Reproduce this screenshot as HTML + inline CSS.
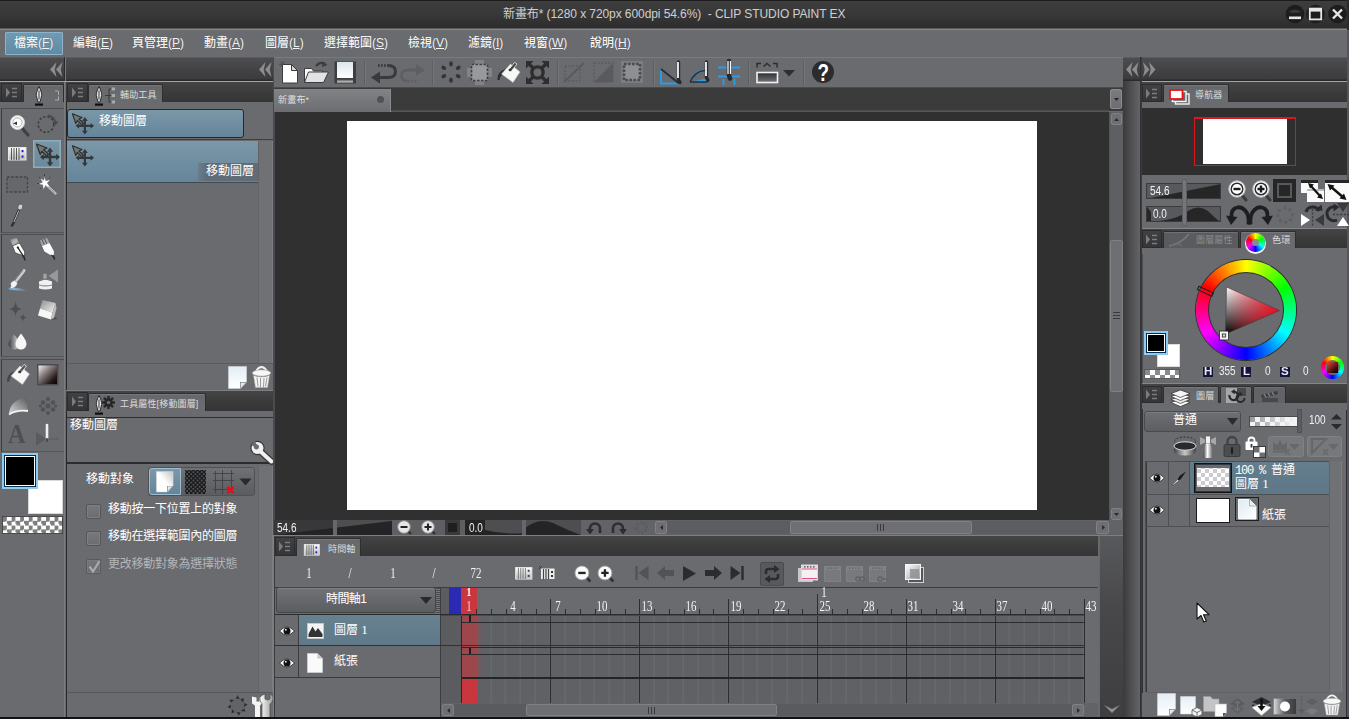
<!DOCTYPE html>
<html lang="zh-Hant">
<head>
<meta charset="utf-8">
<title>CLIP STUDIO PAINT EX</title>
<style>
*{box-sizing:border-box;margin:0;padding:0}
html,body{width:1349px;height:719px;overflow:hidden;background:#6a6b6f}
body{position:relative;font-family:"Liberation Sans","Noto Sans CJK TC",sans-serif;font-size:12px;color:#e8e8e8}
.a{position:absolute}
.t{position:absolute;white-space:nowrap;line-height:1}
svg{position:absolute;overflow:visible}
.dk{background:linear-gradient(#5c5c5e 0,#5c5c5e 1px,#4d4d4f 1px,#3b3b3d 22px,#2a2a2c 23px)}
.hdr{background:linear-gradient(#444 0,#3a3a3a 60%,#353535 100%)}
.pn{background:#6a6b6f}
.mi{position:absolute;top:36px;font-size:12px;color:#f4f4f4;white-space:nowrap;line-height:14px;font-weight:500;text-shadow:0 0 1px rgba(0,0,0,.3)}
.mi u{text-decoration-thickness:1px;text-underline-offset:1px}
.menuic{position:absolute;width:21px;height:19px;background:linear-gradient(#414143,#353537);border:1px solid #2c2c2e}
.tab{position:absolute;background:linear-gradient(#66676b,#6a6b6f 60%);border-radius:2px 2px 0 0;border:1px solid #2e2e30;border-bottom:none;box-shadow:inset 0 1px 0 #77787c}
.tabi{position:absolute;background:#5a5b5e;border-radius:2px 2px 0 0;border:1px solid #2e2e30;border-bottom:none;box-shadow:inset 0 1px 0 #707175}
.tl{font-size:9px;color:#dcdcdc;letter-spacing:.15px}
.sel{background:linear-gradient(#7b98a9,#66859a)}
.num{font-size:12.500px;transform:scaleX(.8);transform-origin:0 0;letter-spacing:0}
.snum{font-family:"Liberation Serif",serif;font-size:14px;transform:scaleX(.78);transform-origin:50% 0;width:30px;text-align:center}
.cb{position:absolute;width:15px;height:15px;background:linear-gradient(#77787c,#6c6d71);border:1px solid #55565a;border-radius:2px;box-shadow:inset 0 0 0 1px #7e7f83}
</style>
</head>
<body>
<!-- ===== TITLE BAR ===== -->
<div class="a" id="titlebar" style="left:0;top:0;width:1349px;height:28px;background:linear-gradient(#1c1c1c 0,#1c1c1c 1px,#3d3d3d 1px,#383838 50%,#2c2c2c 100%)"></div>
<div class="a" style="left:0;top:28px;width:1349px;height:1px;background:#58585a"></div><div class="a" style="left:0;top:29px;width:1349px;height:1px;background:#88898c"></div>
<div class="t" style="left:503px;top:8px;font-size:12px;color:#cfcfcf;letter-spacing:-.08px">新畫布* (1280 x 720px 600dpi 54.6%)&nbsp; - CLIP STUDIO PAINT EX</div>
<!-- window buttons -->
<svg style="left:1285px;top:4px" width="64" height="20" viewBox="0 0 64 20">
 <circle cx="10" cy="10" r="9.3" fill="#1d1d1d"/><circle cx="30.5" cy="10" r="9.3" fill="#1d1d1d"/><circle cx="52.5" cy="10" r="9.3" fill="#1d1d1d"/>
 <path d="M3.5 8 Q10 3 16.5 8 Q10 10 3.5 8Z" fill="#3a3a3a"/>
 <rect x="4" y="12.5" width="12" height="2.6" fill="#e6e6e6"/>
 <rect x="24.8" y="4.6" width="11.4" height="10.8" fill="none" stroke="#e6e6e6" stroke-width="1.8"/><rect x="24.8" y="4.6" width="11.4" height="3" fill="#e6e6e6"/>
 <path d="M48 5.5L57 14.5M57 5.5L48 14.5" stroke="#e6e6e6" stroke-width="2.4"/>
</svg>

<!-- ===== MENU BAR ===== -->
<div class="a" id="menubar" style="left:0;top:30px;width:1349px;height:27px;background:#6a6b6f"></div>
<div class="a" style="left:5px;top:32px;width:58px;height:23px;background:linear-gradient(#6f9ab3,#5f8ba5);border:1px solid #8db4c9;border-radius:1px"></div>
<div class="mi" style="left:14px">檔案(<u>F</u>)</div>
<div class="mi" style="left:73px">編輯(<u>E</u>)</div>
<div class="mi" style="left:132px">頁管理(<u>P</u>)</div>
<div class="mi" style="left:204px">動畫(<u>A</u>)</div>
<div class="mi" style="left:265px">圖層(<u>L</u>)</div>
<div class="mi" style="left:324px">選擇範圍(<u>S</u>)</div>
<div class="mi" style="left:408px">檢視(<u>V</u>)</div>
<div class="mi" style="left:468px">濾鏡(<u>I</u>)</div>
<div class="mi" style="left:524px">視窗(<u>W</u>)</div>
<div class="mi" style="left:590px">說明(<u>H</u>)</div>

<!--SECTION:LEFT-->
<!-- ===== LEFT: collapse strips ===== -->
<div class="a dk" style="left:0;top:57px;width:64px;height:24px"></div>
<div class="a dk" style="left:66px;top:57px;width:207px;height:24px"></div>
<div class="a" style="left:64px;top:57px;width:1px;height:25px;background:#2a2a2c"></div><div class="a" style="left:65px;top:57px;width:1px;height:25px;background:#77787b"></div><div class="a" style="left:64px;top:82px;width:1px;height:635px;background:#7a7b7f"></div><div class="a" style="left:66px;top:82px;width:1px;height:635px;background:#28282a"></div>
<div class="a" style="left:0;top:81px;width:273px;height:1px;background:#a4a4a6"></div>
<svg style="left:50px;top:62px" width="13" height="15" viewBox="0 0 13 15"><path d="M6.500 0L0 7.500 6.500 15 4.800 7.500zM12.500 0L6 7.500 12.500 15 10.800 7.500z" fill="#8c8c8e"/></svg>
<svg style="left:259px;top:62px" width="13" height="15" viewBox="0 0 13 15"><path d="M6.500 0L0 7.500 6.500 15 4.800 7.500zM12.500 0L6 7.500 12.500 15 10.800 7.500z" fill="#8c8c8e"/></svg>

<!-- tool palette header -->
<div class="a hdr" style="left:0;top:82px;width:64px;height:20px"></div><div class="a pn" style="left:0;top:102px;width:64px;height:6px"></div>
<div class="menuic" style="left:1px;top:83px"></div>
<svg style="left:6px;top:87px" width="12" height="11" viewBox="0 0 12 11"><path d="M0 .5L4 5.500 0 10.500z" fill="#7c7c7e"/><path d="M6 1.500h5M6 5.500h5M6 9.500h5" stroke="#7c7c7e" stroke-width="1.600"/></svg>
<div class="tab" style="left:23px;top:84px;width:41px;height:18px"></div>
<svg style="left:33px;top:86px" width="12" height="21" viewBox="0 0 12 21"><path d="M6 .5C4.600 3.500 3 7 3.300 9.500c.2 2 1.400 4 1.700 6.500h2c.3-2.500 1.500-4.500 1.700-6.500C9 7 7.400 3.500 6 .5z" fill="#e4e4e4" stroke="#2a2a2c" stroke-width="1"/><path d="M6 4.500v9" stroke="#6a6a6c" stroke-width="1.400"/><path d="M2 17.500h8v2.200H2z" fill="#0e0e10"/></svg>
<svg style="left:54px;top:90px" width="6" height="12" viewBox="0 0 6 12"><path d="M1 1h3M4.500 1v4M1 10h3M4.500 6.500v4" stroke="#c8c8c8" stroke-width="1" fill="none" opacity=".7"/></svg>


<!-- tool groups -->
<div class="a" style="left:1px;top:108px;width:63px;height:125px;border:1px solid #3c3d40;border-right:none;border-top-color:#4c4d50;border-bottom-color:#55565a;background:#6a6b6f"></div>
<div class="a" style="left:1px;top:234px;width:63px;height:123px;border:1px solid #3c3d40;border-right:none;border-top-color:#4c4d50;border-bottom-color:#55565a;background:#6a6b6f"></div>
<div class="a" style="left:1px;top:359px;width:63px;height:93px;border:1px solid #3c3d40;border-right:none;border-top-color:#4c4d50;border-bottom-color:#55565a;background:#6a6b6f"></div>
<div class="a" style="left:33px;top:140px;width:28px;height:28px;background:linear-gradient(#7a97a7,#6a8899);box-shadow:inset 0 0 0 1.500px #8badbd"></div>

<!-- magnifier -->
<svg style="left:8px;top:112px" width="22" height="24" viewBox="0 0 22 24"><path d="M14 16l6 7" stroke="#3f3f41" stroke-width="3.200" stroke-linecap="round"/><circle cx="9.500" cy="10.500" r="7" fill="#fafafa" stroke="#d0d0d0" stroke-width="1"/><circle cx="9.500" cy="10.500" r="4.600" fill="#fff" stroke="#9a9a9a" stroke-width=".8"/><path d="M5 11.500l4-2v3.500z" fill="#333"/></svg>
<!-- rotate -->
<svg style="left:36px;top:113px" width="24" height="22" viewBox="0 0 24 22"><circle cx="10" cy="11.500" r="7.800" fill="none" stroke="#3e3e40" stroke-width="1.600" stroke-dasharray="2.400 1.800"/><path d="M12 2.500q6 1 7.500 7" fill="none" stroke="#4a4a4c" stroke-width="2"/><path d="M16.500 8.500h6l-3 4z" fill="#4a4a4c"/></svg>
<!-- timeline tool -->
<svg style="left:8px;top:147px" width="19" height="14" viewBox="0 0 19 14"><defs><linearGradient id="gtl" x1="0" y1="0" x2="0" y2="1"><stop offset="0" stop-color="#fff"/><stop offset="1" stop-color="#b8b8b8"/></linearGradient></defs><rect x=".5" y=".5" width="17.500" height="12.500" fill="url(#gtl)" stroke="#e8e8e8"/><path d="M3.500 1v12M6 1v12M8.500 1v12M11 1v12" stroke="#555" stroke-width="1"/><rect x="13.500" y="3" width="2" height="2.200" fill="#22c"/><rect x="13.500" y="8.500" width="2" height="2.200" fill="#22c"/></svg>
<!-- move layer tool (selected) -->
<svg style="left:35px;top:143px" width="26" height="24" viewBox="0 0 26 24"><path d="M1.500 1l10.500 4-3.300 1.600 4.800 4.600-1.800 1.800-4.800-4.800L5.200 11.500z" fill="#77766e" stroke="#2a2c30" stroke-width="1.200" stroke-linejoin="round"/><path d="M15 4.500l3.200 4.300h-2v4h5v-2L25 14l-3.800 3.200v-2h-5v4h2L15 23.500l-3.200-4.300h2v-4h-5v2L5 14l3.800-3.200v2h5v-4h-2z" fill="#34383c"/></svg>
<!-- rect select -->
<svg style="left:6px;top:176px" width="23" height="17" viewBox="0 0 23 17"><rect x="1" y="1" width="20.500" height="15" fill="#66676b" stroke="#434346" stroke-width="1.300" stroke-dasharray="2.600 1.600"/></svg>
<!-- magic wand -->
<svg style="left:35px;top:172px" width="24" height="24" viewBox="0 0 24 24"><path d="M12 13.500l8.500 8" stroke="#d4d4d4" stroke-width="2.200" stroke-linecap="round"/><path d="M13.500 15l7 6.500" stroke="#8a8a8a" stroke-width="1"/><path d="M9.500 5l1.200 4 4.300-1-3 3 2.500 3.500-4-1.300-2 4-.5-4.500L4 12l3.800-1.800L5.500 6.500 9 8.500z" fill="#fff"/><path d="M9.500 2v2M4 5l1.200 1.200M15.500 5l-1.200 1.200M2 11.500h1.800M5.500 17l.8-1.200" stroke="#3e3e40" stroke-width="1"/></svg>
<!-- eyedropper -->
<svg style="left:9px;top:203px" width="16" height="24" viewBox="0 0 16 24"><path d="M10.500 5.500L4.500 20 3 22.500" stroke="#2e2e30" stroke-width="2.400" stroke-linecap="round"/><path d="M9.800 7.500L5 19" stroke="#bdbdbd" stroke-width="1"/><ellipse cx="11.300" cy="4" rx="2.400" ry="3" transform="rotate(22 11.300 4)" fill="#cfcfcf" stroke="#444" stroke-width=".6"/></svg>

<!-- pen -->
<svg style="left:7px;top:237px" width="22" height="24" viewBox="0 0 22 24"><defs><linearGradient id="gph" x1="0" y1="0" x2="1" y2="1"><stop offset="0" stop-color="#77787b"/><stop offset=".5" stop-color="#b8b8ba"/><stop offset="1" stop-color="#6e6f72"/></linearGradient></defs><path d="M3 2.500L9.500 1l2.800 5.500L6 9z" fill="url(#gph)"/><path d="M5.500 8.800L12.500 6l5.300 9-.8 5.800-2.300-2.600-6.500-2.400z" fill="#fbfbfb" stroke="#3a3a3c" stroke-width=".7"/><path d="M10.500 10l6.200 9.800" stroke="#1e1e20" stroke-width="1.300"/><circle cx="10.800" cy="10.500" r="1" fill="#1e1e20"/><path d="M16.500 19l1.400 3.800" stroke="#2a2a2c" stroke-width="1.600" stroke-linecap="round"/></svg>
<!-- pencil/marker -->
<svg style="left:37px;top:237px" width="22" height="24" viewBox="0 0 22 24"><path d="M3 3.500l7-2.500 2.500 5-7.500 3z" fill="#a9a9ab"/><path d="M5 2.800l2.300 5M7.500 1.800l2.300 5" stroke="#58595c" stroke-width="1.100"/><path d="M5 9l7.500-3 4.500 8.500-.3 4.500-4.200-1.500-5-3z" fill="#fbfbfb"/><path d="M13.500 17.500l3.300 1 .8 3.700z" fill="#2a2a2c"/><path d="M16.500 19l1 3" stroke="#2a2a2c" stroke-width="1.400" stroke-linecap="round"/></svg>
<!-- brush -->
<svg style="left:6px;top:268px" width="24" height="24" viewBox="0 0 24 24"><defs><linearGradient id="gbl" x1="0" x2="1"><stop offset="0" stop-color="#8fd0ff"/><stop offset="1" stop-color="#8fd0ff" stop-opacity="0"/></linearGradient></defs><path d="M2 21q8-3 20 1.500-12 1-20-1.500z" fill="url(#gbl)"/><path d="M18 2.500L9 14" stroke="#cfcfcf" stroke-width="3" stroke-linecap="round"/><path d="M17 2L8 13.500" stroke="#777" stroke-width="1"/><path d="M8.500 12.500l3 2.500q-1 5-8 6 2.500-3 1-5.500 1.500-2.500 4-3z" fill="#f4f4f4" stroke="#888" stroke-width=".5"/><path d="M3 20q2-.5 4 .5-2.500 1-4-.5z" fill="#58b4f0"/></svg>
<!-- airbrush -->
<svg style="left:35px;top:268px" width="26" height="24" viewBox="0 0 26 24"><path d="M23 1.500v13L13.500 8z" fill="#97989b"/><rect x="8" y="5.500" width="4" height="6" rx="1.200" fill="#a4a4a6" stroke="#6e6f72" stroke-width=".6"/><path d="M4 13.500q6.500-3.500 13 0v7q-6.500 2-13 0z" fill="#f1f1f1"/><path d="M4 17q6.500 1.800 13 0" stroke="#8a8b8e" stroke-width="1.200" fill="none"/><path d="M5 12.300q5.500-2.300 11 0" stroke="#77787b" stroke-width="1.400" fill="none"/></svg>
<!-- decoration sparkle -->
<svg style="left:8px;top:300px" width="22" height="24" viewBox="0 0 22 24"><path d="M7.500 1q.3 7.200 6.500 8-6.200.8-6.500 8-.3-7.200-6.500-8 6.200-.8 6.500-8z" fill="#4e4f53"/><path d="M15 13q.2 3.900 3.600 4.500-3.400.6-3.600 4.500-.2-3.900-3.600-4.500 3.400-.6 3.600-4.500z" fill="#4e4f53"/></svg>
<!-- eraser -->
<svg style="left:36px;top:298px" width="24" height="24" viewBox="0 0 24 24"><defs><linearGradient id="ger" x1="0" y1="0" x2="1" y2="1"><stop offset="0" stop-color="#8e8e90"/><stop offset="1" stop-color="#f2f2f2"/></linearGradient></defs><path d="M14 22l7.500-1-2-2z" fill="#4c4c4e"/><path d="M6.500 2l13 3-3 9.500-12.500-4z" fill="url(#ger)"/><path d="M4 10.500l12.500 4-1.500 7L2 17.500z" fill="#f6f6f6"/><path d="M16.500 14.500l3-9.500 1 5-2.500 10-3 1.500z" fill="#bdbdbf"/></svg>
<!-- blend -->
<svg style="left:7px;top:332px" width="22" height="18" viewBox="0 0 22 18"><defs><linearGradient id="gbd" x1="0" x2="1"><stop offset="0" stop-color="#3e3e40"/><stop offset="1" stop-color="#e8e8e8"/></linearGradient></defs><path d="M7 2.500q5.500 6 5.500 9.500a5.500 5.500 0 0 1-11 0Q1.500 8.500 7 2.500z" fill="url(#gbd)"/><path d="M14 1.500q5.500 7 5.500 10.500a5.500 5.500 0 0 1-11 0Q8.500 8.500 14 1.500z" fill="#f6f6f6"/></svg>

<!-- fill bucket -->
<svg style="left:5px;top:362px" width="26" height="26" viewBox="0 0 26 26"><path d="M2 20q-1-8 8-11l-2 5q-3 1-4 6z" fill="#47474a"/><path d="M6 14L15 4l9.500 8-7 10.500z" fill="#f7f7f7" stroke="#bbb" stroke-width=".6"/><path d="M13 10L19 2.500l2.500 1.500-6 7.500z" fill="#555" stroke="#eee" stroke-width=".8"/><circle cx="14.500" cy="10" r="1.300" fill="#333"/></svg>
<!-- gradient -->
<svg style="left:37px;top:364px" width="22" height="22" viewBox="0 0 22 22"><defs><linearGradient id="ggr" x1="0" y1="0" x2="1" y2="1"><stop offset="0" stop-color="#fff"/><stop offset=".38" stop-color="#8a8080"/><stop offset=".75" stop-color="#241a1a"/><stop offset="1" stop-color="#000"/></linearGradient></defs><rect x=".75" y=".75" width="20" height="20" fill="url(#ggr)" stroke="#4c4c4f" stroke-width="1.500"/></svg>
<!-- figure/contour -->
<svg style="left:7px;top:395px" width="24" height="22" viewBox="0 0 24 22"><defs><linearGradient id="gfg" x1="1" y1="0" x2="0" y2="1"><stop offset="0" stop-color="#58585b"/><stop offset="1" stop-color="#d8d8d8"/></linearGradient></defs><path d="M2 19Q3 5 19 2.500 19.500 10 21 15.500 10 14 2 19z" fill="url(#gfg)"/><path d="M2 19.500Q10 14.500 21 16" stroke="#f4f4f4" stroke-width="1.800" fill="none"/></svg>
<!-- tone (disabled) -->
<svg style="left:38px;top:396px" width="20" height="20" viewBox="0 0 20 20" opacity=".55"><g fill="#3e3e41"><circle cx="10" cy="3" r="2"/><circle cx="5" cy="6.500" r="2.300"/><circle cx="15" cy="6.500" r="2.300"/><circle cx="10" cy="10" r="2.600"/><circle cx="2.500" cy="10" r="1.600"/><circle cx="17.500" cy="10" r="1.600"/><circle cx="5" cy="13.500" r="2.300"/><circle cx="15" cy="13.500" r="2.300"/><circle cx="10" cy="17" r="2"/></g></svg>
<!-- text A -->
<div class="t" style="left:8px;top:421px;font-family:'Liberation Serif',serif;font-size:27px;font-weight:bold;color:#4e4f53;line-height:27px;transform:scaleX(.9);transform-origin:0 0">A</div>
<!-- correct line -->
<svg style="left:35px;top:423px" width="26" height="26" viewBox="0 0 26 26"><path d="M1 9v14l10-7z" fill="#5a5b5e"/><path d="M12 16h12" stroke="#5a5b5e" stroke-width="1"/><path d="M12 2v13" stroke="#f0f0f0" stroke-width="2.600" stroke-linecap="round"/><path d="M12 15v4" stroke="#444" stroke-width="1.600"/></svg>

<!-- colour swatches -->
<div class="a" style="left:28px;top:480px;width:35px;height:34px;background:#fff;border:1px solid #d9d9d9"></div>
<div class="a" style="left:2px;top:453px;width:36px;height:36px;background:#000;border:2px solid #8ccbf2;box-shadow:inset 0 0 0 1px #0c2c4c,inset 0 0 0 2px #fff"></div>
<div class="a" style="left:2px;top:516px;width:61px;height:18px;border:1px solid #4a4a4c;background:repeating-conic-gradient(#fff 0 25%,#7e7e7e 0 50%) 0 0/8.600px 8.600px"></div>
<!-- ===== SUB TOOL PANEL ===== -->
<div class="a hdr" style="left:66px;top:82px;width:207px;height:20px"></div><div class="a pn" style="left:67px;top:102px;width:206px;height:6px"></div>
<div class="menuic" style="left:67px;top:83px"></div>
<svg style="left:72px;top:87px" width="12" height="11" viewBox="0 0 12 11"><path d="M0 .5L4 5.500 0 10.500z" fill="#7c7c7e"/><path d="M6 1.500h5M6 5.500h5M6 9.500h5" stroke="#7c7c7e" stroke-width="1.600"/></svg>
<div class="tab" style="left:88px;top:84px;width:75px;height:18px"></div>
<svg style="left:93px;top:86px" width="12" height="21" viewBox="0 0 12 21"><path d="M6 .5C4.600 3.500 3 7 3.300 9.500c.2 2 1.400 4 1.700 6.500h2c.3-2.500 1.500-4.500 1.700-6.500C9 7 7.400 3.500 6 .5z" fill="#e4e4e4" stroke="#2a2a2c" stroke-width="1"/><path d="M6 4.500v9" stroke="#6a6a6c" stroke-width="1.400"/><path d="M2 17.500h8v2.200H2z" fill="#0e0e10"/></svg>
<svg style="left:104px;top:87px" width="12" height="18" viewBox="0 0 12 18"><path d="M1 8.500h4M5 2v13M5 2h3M5 8.500h3M5 15h3" stroke="#3a3a3c" stroke-width="1" fill="none"/><rect x="7.500" y=".5" width="3.500" height="3" fill="#a9a9ab"/><rect x="7.500" y="7" width="3.500" height="3" fill="#a9a9ab"/><rect x="7.500" y="13.500" width="3.500" height="3" fill="#a9a9ab"/></svg>
<div class="t tl" style="left:120px;top:91px">輔助工具</div>
<!-- selected group -->
<div class="a sel" style="left:67px;top:109px;width:177px;height:29px;border:1px solid #26282a;border-radius:3px"></div>
<svg style="left:71px;top:112px" width="24" height="24" viewBox="0 0 26 24"><path d="M1.500 1l10.500 4-3.300 1.600 4.800 4.600-1.800 1.800-4.800-4.800L5.200 11.500z" fill="#77766e" stroke="#2a2c30" stroke-width="1.200" stroke-linejoin="round"/><path d="M15 4.500l3.200 4.300h-2v4h5v-2L25 14l-3.800 3.200v-2h-5v4h2L15 23.500l-3.200-4.300h2v-4h-5v2L5 14l3.800-3.200v2h5v-4h-2z" fill="#34383c"/></svg>
<div class="t" style="left:99px;top:115px;font-size:12px;color:#fff">移動圖層</div>
<div class="a" style="left:67px;top:139px;width:206px;height:1px;background:#3d3e40"></div>
<!-- item -->
<div class="a sel" style="left:67px;top:141px;width:191px;height:42px;border-bottom:1px solid #3f4a52"></div>
<svg style="left:71px;top:144px" width="24" height="24" viewBox="0 0 26 24"><path d="M1.500 1l10.500 4-3.300 1.600 4.800 4.600-1.800 1.800-4.800-4.800L5.200 11.500z" fill="#77766e" stroke="#2a2c30" stroke-width="1.200" stroke-linejoin="round"/><path d="M15 4.500l3.200 4.300h-2v4h5v-2L25 14l-3.800 3.200v-2h-5v4h2L15 23.500l-3.200-4.300h2v-4h-5v2L5 14l3.800-3.200v2h5v-4h-2z" fill="#34383c"/></svg>
<div class="a" style="left:198px;top:163px;width:60px;height:18px;background:linear-gradient(90deg,rgba(98,108,120,.4),#626c78 15%)"></div>
<div class="t" style="left:206px;top:165px;font-size:12px;color:#fff">移動圖層</div>
<!-- list scrollbar -->
<div class="a" style="left:258px;top:141px;width:15px;height:222px;background:#707175;border-left:1px solid #626367;box-shadow:inset -1px 0 0 #7c7d81"></div>

<div class="a" style="left:67px;top:363px;width:206px;height:1px;background:#5a5b5f"></div>

<!-- new / trash -->
<svg style="left:228px;top:366px" width="19" height="23" viewBox="0 0 19 23"><defs><linearGradient id="gnw" x1="0" y1="0" x2="0" y2="1"><stop offset="0" stop-color="#e4eef5"/><stop offset="1" stop-color="#fff"/></linearGradient></defs><path d="M.5.5h18v15.500l-6 6.500H.5z" fill="url(#gnw)" stroke="#cfd5da" stroke-width=".6"/><path d="M18.500 16h-6.500v6.500z" fill="#555" /><path d="M12.500 16.500h5.500l-5.500 5.500z" fill="#e8e8e8"/></svg>
<svg style="left:251px;top:365px" width="21" height="24" viewBox="0 0 21 24"><path d="M5 6q5.500-8 11 0" fill="none" stroke="#f2f2f2" stroke-width="1.800"/><ellipse cx="10.500" cy="8" rx="9.300" ry="3.200" fill="#f7f7f7" stroke="#999" stroke-width=".6"/><path d="M2.500 10.500l2 12h12l2-12q-8 3-16 0z" fill="#f3f3f3" stroke="#aaa" stroke-width=".5"/><path d="M6 12.500l1 9M9.500 13v9M13 13l-.5 9M16 12.500l-1.500 9" stroke="#9a9a9a" stroke-width="1"/></svg>

<!-- ===== TOOL PROPERTY PANEL ===== -->
<div class="a" style="left:66px;top:390px;width:207px;height:1px;background:#7d7e82"></div>
<div class="a hdr" style="left:66px;top:391px;width:207px;height:20px"></div><div class="a pn" style="left:67px;top:411px;width:206px;height:6px"></div>
<div class="menuic" style="left:67px;top:392px"></div>
<svg style="left:72px;top:396px" width="12" height="11" viewBox="0 0 12 11"><path d="M0 .5L4 5.500 0 10.500z" fill="#7c7c7e"/><path d="M6 1.500h5M6 5.500h5M6 9.500h5" stroke="#7c7c7e" stroke-width="1.600"/></svg>
<div class="tab" style="left:88px;top:393px;width:118px;height:18px"></div>
<svg style="left:93px;top:395px" width="12" height="21" viewBox="0 0 12 21"><path d="M6 .5C4.600 3.500 3 7 3.300 9.500c.2 2 1.400 4 1.700 6.500h2c.3-2.500 1.500-4.500 1.700-6.500C9 7 7.400 3.500 6 .5z" fill="#e4e4e4" stroke="#2a2a2c" stroke-width="1"/><path d="M6 4.500v9" stroke="#6a6a6c" stroke-width="1.400"/><path d="M2 17.500h8v2.200H2z" fill="#0e0e10"/></svg>
<svg style="left:102px;top:396px" width="13" height="13" viewBox="0 0 13 13"><g fill="#262628"><circle cx="6.500" cy="6.500" r="4.300"/><rect x="5.300" y="0" width="2.400" height="13"/><rect x="5.300" y="0" width="2.400" height="13" transform="rotate(45 6.500 6.500)"/><rect x="5.300" y="0" width="2.400" height="13" transform="rotate(90 6.500 6.500)"/><rect x="5.300" y="0" width="2.400" height="13" transform="rotate(135 6.500 6.500)"/></g><circle cx="6.500" cy="6.500" r="1.800" fill="#6a6b6f"/></svg>
<div class="t tl" style="left:120px;top:400px">工具屬性[移動圖層]</div>
<!-- preview box -->
<div class="a" style="left:67px;top:417px;width:206px;height:47px;background:#6a6b6f;border-top:1px solid #2e2f31;border-bottom:2px solid #2b2c2e"></div>
<div class="t" style="left:70px;top:419px;font-size:12px;color:#fff">移動圖層</div>
<svg style="left:249px;top:439px" width="25" height="25" viewBox="0 0 25 25"><path d="M11 12l11.500 10.500" stroke="#38383a" stroke-width="6.500" stroke-linecap="round"/><circle cx="8.500" cy="9" r="7.200" fill="#38383a"/><path d="M11 12l11.500 10.500" stroke="#f0f0f0" stroke-width="4" stroke-linecap="round"/><circle cx="8.500" cy="9" r="6" fill="#f0f0f0"/><path d="M8.500 9L1 5.500 5.500 0z" fill="#6a6b6f"/><circle cx="7.300" cy="7.800" r="2.600" fill="#6a6b6f"/><path d="M4.200 3.200L1.500 6.500" stroke="#38383a" stroke-width=".8"/></svg>
<!-- property rows -->
<div class="a" style="left:258px;top:466px;width:15px;height:226px;background:#707175;border-left:1px solid #626367;box-shadow:inset -1px 0 0 #7c7d81"></div>

<div class="t" style="left:86px;top:473px;font-size:12px;color:#fff">移動對象</div>
<div class="a" style="left:148px;top:467px;width:107px;height:29px;background:linear-gradient(#707175,#5b5c60);border:1px solid #505155;border-radius:3px"></div>
<div class="a sel" style="left:149px;top:468px;width:32px;height:27px;border:1px solid #9dbdd0;border-radius:3px 0 0 3px"></div>
<svg style="left:156px;top:469.500px" width="17.500" height="23.500" viewBox="0 0 19 23"><defs><linearGradient id="gpg" x1="1" y1="0" x2="0" y2="1"><stop offset="0" stop-color="#c4c4c6"/><stop offset=".5" stop-color="#fff"/></linearGradient></defs><path d="M.5.500h18v15.500l-6 6.500H.5z" fill="url(#gpg)" stroke="#d8d8d8" stroke-width=".6"/><path d="M18.500 16h-6.500v6.500z" fill="#555"/><path d="M12.500 16.500h5.500l-5.500 5.500z" fill="#e8e8e8"/></svg>
<div class="a" style="left:185px;top:470px;width:21px;height:24px;background-color:#55565a;background-image:radial-gradient(circle,#1c1c1e 1.300px,transparent 1.600px),radial-gradient(circle,#1c1c1e 1.300px,transparent 1.600px);background-size:4.200px 4.200px;background-position:0 0,2.100px 2.100px"></div>
<svg style="left:212px;top:469px" width="26" height="26" viewBox="0 0 26 26"><path d="M1 4.500h21M1 11.500h21M1 20.500h15M3.500 2v22M10.500 1v24M19.500 1v17" stroke="#3a3b3e" stroke-width=".9" opacity=".85"/><path d="M15.500 18l6 6M21.500 18l-6 6" stroke="#e0101c" stroke-width="2.600"/></svg>
<svg style="left:239px;top:478px" width="13" height="8" viewBox="0 0 13 8"><path d="M.5.500h12L6.500 7.500z" fill="#2a2a2c"/></svg>
<div class="cb" style="left:86px;top:504px"></div>
<div class="t" style="left:108px;top:503px;font-size:12px;color:#fff;letter-spacing:-.25px">移動按一下位置上的對象</div>
<div class="cb" style="left:86px;top:531px"></div>
<div class="t" style="left:108px;top:530px;font-size:12px;color:#fff;letter-spacing:-.25px">移動在選擇範圍內的圖層</div>
<div class="cb" style="left:86px;top:559px;opacity:.85"></div>
<svg style="left:87px;top:559px" width="15" height="15" viewBox="0 0 15 15"><path d="M2.500 7.500l3.500 5L12.500 2" fill="none" stroke="#a9aaad" stroke-width="2.200"/></svg>
<div class="t" style="left:108px;top:558px;font-size:12px;color:#b4b5b8;letter-spacing:-.25px">更改移動對象為選擇狀態</div>
<div class="a" style="left:67px;top:692px;width:206px;height:1px;background:#56575b"></div>
<!-- bottom icons -->
<svg style="left:226px;top:694px" width="23" height="23" viewBox="0 0 23 23"><circle cx="11.500" cy="11.500" r="8" fill="#626367"/><g fill="#2c2c2e"><path d="M11.500 1l2 4-3.500-.5z"/><path d="M18 4l-1 4.500-2.500-3z"/><path d="M21.500 10.500l-3.500 2.500.5-4z"/><path d="M19.500 17.500l-4.500-.5 3-2.500z"/><path d="M13 21.500l-2.500-3.500 4 .5z"/><path d="M5.500 19.500l.5-4.500 2.500 3z"/><path d="M1.500 13l3.500-2.500-.5 4z"/><path d="M3.500 5.500l4.500.5-3 2.500z"/></g></svg>
<svg style="left:250px;top:693px" width="23" height="25" viewBox="0 0 23 25"><defs><linearGradient id="gwr" x1="0" x2="1"><stop offset="0" stop-color="#fff"/><stop offset="1" stop-color="#9a9a9c"/></linearGradient></defs><path d="M2 3.500v7l3 2v12h5v-12l2-2v-7l-2.500 1v4h-3v-4z" fill="#f4f4f4"/><path d="M12 24.500v-14q-3-2-2-6 1.500-3 5-3.500v5l2.500 1 2.500-1v-5q4 1.500 3 6-1 3-3 4v13.500z" fill="url(#gwr)" stroke="#4a4a4c" stroke-width=".7"/></svg>
<div class="a" style="left:0;top:717px;width:1349px;height:2px;background:#111"></div>
<!--END:LEFT-->
<!--SECTION:CENTER-->
<!-- ===== CENTER: toolbar ===== -->
<div class="a" style="left:273px;top:57px;width:2px;height:662px;background:#4a4b4e"></div>
<div class="a pn" style="left:274px;top:57px;width:849px;height:30px;border-top:1px solid #7a7b7f"></div>
<div class="a" style="left:274px;top:87px;width:849px;height:1px;background:#4a4b4e"></div>
<!-- group separators -->
<div class="a" style="left:364px;top:61px;width:1px;height:24px;background:#5c5d61;box-shadow:1px 0 0 #75767a"></div>
<div class="a" style="left:432px;top:61px;width:1px;height:24px;background:#5c5d61;box-shadow:1px 0 0 #75767a"></div>
<div class="a" style="left:557px;top:61px;width:1px;height:24px;background:#5c5d61;box-shadow:1px 0 0 #75767a"></div>
<div class="a" style="left:653px;top:61px;width:1px;height:24px;background:#5c5d61;box-shadow:1px 0 0 #75767a"></div>
<div class="a" style="left:748px;top:61px;width:1px;height:24px;background:#5c5d61;box-shadow:1px 0 0 #75767a"></div>
<div class="a" style="left:803px;top:61px;width:1px;height:24px;background:#5c5d61;box-shadow:1px 0 0 #75767a"></div>
<!-- new -->
<svg style="left:278px;top:60px" width="22" height="24" viewBox="0 0 22 24"><path d="M2 2l5 5M7 2L2 7M4.500 1v7M1 4.500h7" stroke="#4a4a4c" stroke-width=".8"/><path d="M4.500 4.500h9l6 6v12.500h-15z" fill="#fff" stroke="#3c3c3e" stroke-width="1"/><path d="M13.500 4.500v6h6z" fill="#d4d4d6" stroke="#3c3c3e" stroke-width="1" stroke-linejoin="round"/></svg>
<!-- open -->
<svg style="left:303px;top:60px" width="27" height="24" viewBox="0 0 27 24"><path d="M13 6q4-5 9-2" fill="none" stroke="#3c3c3e" stroke-width="2.200"/><path d="M19.500 1.500l5 3.500-5.500 2z" fill="#3c3c3e"/><path d="M1.500 22.500v-14h7l2 2.500h9v11.500z" fill="#fafafa" stroke="#3c3c3e" stroke-width="1"/><path d="M1.500 22.500l4-10.500h20l-5 10.500z" fill="#e2e2e4" stroke="#3c3c3e" stroke-width="1" stroke-linejoin="round"/></svg>
<!-- save -->
<svg style="left:334px;top:61px" width="23" height="23" viewBox="0 0 23 23"><defs><linearGradient id="gsv" x1="0" y1="0" x2="0" y2="1"><stop offset="0" stop-color="#dbe6ee"/><stop offset="1" stop-color="#fff"/></linearGradient><linearGradient id="gsv2" x1="0" y1="0" x2="0" y2="1"><stop offset="0" stop-color="#555"/><stop offset="1" stop-color="#d8d8d8"/></linearGradient></defs><rect x=".5" y=".5" width="21.500" height="22" fill="#3e3e40"/><rect x="3" y="1" width="16" height="16" fill="url(#gsv)"/><rect x="3" y="18.500" width="16" height="3" fill="url(#gsv2)"/></svg>
<!-- undo -->
<svg style="left:370px;top:62px" width="28" height="22" viewBox="0 0 28 22"><path d="M8 3.500h10" stroke="#3a3a3c" stroke-width="2.600" stroke-dasharray="1.800 1.200"/><path d="M18 3.500q7.500 0 7.500 6t-7.500 6H9" fill="none" stroke="#3a3a3c" stroke-width="3"/><path d="M10 9.500v12L1 15.500z" fill="#3a3a3c"/></svg>
<!-- redo (disabled) -->
<svg style="left:400px;top:62px" width="26" height="22" viewBox="0 0 26 22" opacity=".55"><path d="M8 19h10" stroke="#55565a" stroke-width="2.400" stroke-dasharray="1.800 1.200"/><path d="M8 19q-6.500 0-6.500-5.500T8 8h9" fill="none" stroke="#55565a" stroke-width="3"/><path d="M16 2v12l9-6z" fill="#55565a"/></svg>
<!-- clear dots -->
<svg style="left:440px;top:61px" width="22" height="22" viewBox="0 0 22 22"><g fill="#353537"><ellipse cx="11" cy="2.800" rx="1.900" ry="2.600"/><ellipse cx="11" cy="19.200" rx="1.900" ry="2.600"/><ellipse cx="3.800" cy="6.800" rx="2.600" ry="1.900" transform="rotate(30 3.800 6.800)"/><ellipse cx="18.200" cy="6.800" rx="2.600" ry="1.900" transform="rotate(-30 18.200 6.800)"/><ellipse cx="3.800" cy="15.200" rx="2.600" ry="1.900" transform="rotate(-30 3.800 15.200)"/><ellipse cx="18.200" cy="15.200" rx="2.600" ry="1.900" transform="rotate(30 18.200 15.200)"/></g></svg>
<!-- selection scale -->
<svg style="left:467px;top:60px" width="25" height="25" viewBox="0 0 25 25"><path d="M8 0h9v4h4v4h4v9h-4v4h-4v4H8v-4H4v-4H0V8h4V4h4z" fill="#8a8b8f" opacity=".75"/><rect x="4.500" y="4.500" width="16" height="16" fill="#98999c" stroke="#3e3e40" stroke-width="1.600" stroke-dasharray="2.400 1.600"/></svg>
<!-- fill -->
<svg style="left:495px;top:60px" width="27" height="26" viewBox="0 0 26 26"><path d="M2 20q-1-8 8-11l-2 5q-3 1-4 6z" fill="#2e2e30"/><path d="M6 14L15 4l9.500 8-7 10.500z" fill="#f7f7f7" stroke="#bbb" stroke-width=".6"/><path d="M13 10L19 2.500l2.500 1.500-6 7.500z" fill="#444" stroke="#eee" stroke-width=".8"/><circle cx="14.500" cy="10" r="1.300" fill="#333"/></svg>
<!-- expand -->
<svg style="left:526px;top:61px" width="23" height="23" viewBox="0 0 23 23"><circle cx="11.500" cy="11.500" r="5.600" fill="none" stroke="#2e2e30" stroke-width="3.400"/><g stroke="#2e2e30" stroke-width="3.400"><path d="M7.500 7.500L2.500 2.500M15.500 7.500L20.500 2.500M7.500 15.500L2.500 20.500M15.500 15.500L20.500 20.500"/></g><g fill="#2e2e30"><path d="M0 0h7.500L0 7.500zM23 0h-7.500L23 7.500zM0 23h7.500L0 15.500zM23 23h-7.500L23 15.500z"/></g></svg>
<!-- disabled icons -->
<svg style="left:563px;top:62px" width="22" height="21" viewBox="0 0 22 21" opacity=".5"><rect x="2" y="4" width="15" height="15" fill="none" stroke="#4a4b4e" stroke-width="1.400" stroke-dasharray="2 1.600"/><path d="M1 20L21 1" stroke="#4a4b4e" stroke-width="2"/></svg>
<svg style="left:592px;top:61px" width="23" height="23" viewBox="0 0 23 23" opacity=".5"><rect x="2" y="2" width="19" height="19" fill="none" stroke="#4a4b4e" stroke-width="1.400" stroke-dasharray="2 1.600"/><path d="M21 2v19H2z" fill="#4a4b4e"/></svg>
<svg style="left:621px;top:61px" width="22" height="22" viewBox="0 0 22 22"><rect x="0" y="0" width="22" height="22" fill="#7c7d81"/><rect x="3" y="3" width="16" height="16" fill="#8e8f92" stroke="#4a4b4e" stroke-width="2.600" stroke-dasharray="2.600 1.400"/></svg>
<!-- snap ruler -->
<svg style="left:659px;top:61px" width="24" height="24" viewBox="0 0 24 24"><path d="M2 8.500v14h19" fill="none" stroke="#2a9de8" stroke-width="1.800"/><path d="M2 8l18 14.500" stroke="#23303a" stroke-width="1.800"/><path d="M19.500 1v17.500l1.500 3" stroke="#2a2a2c" stroke-width="3.400" stroke-linecap="round"/><path d="M19 1v16" stroke="#f6f6f6" stroke-width="1.800"/></svg>
<!-- special ruler -->
<svg style="left:688px;top:61px" width="25" height="24" viewBox="0 0 25 24"><path d="M2 20.500q6-12 16-11" fill="none" stroke="#2a9de8" stroke-width="1.600"/><path d="M2 21h21l-3-4z" fill="#2a9de8"/><path d="M2 21q5-11 15-11.500M2 21h17" fill="none" stroke="#23303a" stroke-width="1.600"/><path d="M18.500 1v15.500l1.500 3" stroke="#2a2a2c" stroke-width="3.400" stroke-linecap="round"/><path d="M18 1v14" stroke="#f6f6f6" stroke-width="1.800"/></svg>
<!-- grid snap -->
<svg style="left:717px;top:60px" width="24" height="26" viewBox="0 0 24 26"><path d="M1 7.500h22M1 16.500h22M6.500 19v6M17.500 19v6" stroke="#2a9de8" stroke-width="1.800"/><path d="M12 1v14.500l1 3" stroke="#2a2a2c" stroke-width="4.600" stroke-linecap="round"/><path d="M11 1v13M13.500 1v13" stroke="#f6f6f6" stroke-width="1.300"/></svg>
<!-- dropdown icon -->
<svg style="left:756px;top:62px" width="40" height="22" viewBox="0 0 40 22"><defs><linearGradient id="gdd" x1="0" y1="0" x2="0" y2="1"><stop offset="0" stop-color="#2c2c2e"/><stop offset="1" stop-color="#77787b"/></linearGradient></defs><path d="M1 5.500V1.500h4M17 1.500h4v4M7.500 4.500L11 1.500l3.500 3" fill="none" stroke="#2e2e30" stroke-width="1.500"/><rect x="1" y="10.500" width="20.500" height="10" fill="url(#gdd)" stroke="#f2f2f2" stroke-width="1.600"/><path d="M27 8h12l-6 6.500z" fill="#2e2e30"/></svg>
<!-- help -->
<svg style="left:811px;top:60px" width="24" height="24" viewBox="0 0 24 24"><circle cx="12" cy="12" r="11" fill="#2c2c2e"/><text x="0" y="20.600" text-anchor="middle" font-family="Liberation Sans,sans-serif" font-weight="bold" font-size="23.500" fill="#fff" transform="translate(12.300 0) scale(.8 1)">?</text></svg>

<!-- ===== tab row ===== -->
<div class="a" style="left:274px;top:88px;width:849px;height:23px;background:#3b3b3c"></div>
<div class="a" style="left:274px;top:89px;width:117px;height:23px;background:linear-gradient(#828386,#6c6d70);border-right:1px solid #8a8b8e"></div>
<div class="t" style="left:278px;top:96px;font-size:9px;color:#dedede;letter-spacing:.2px">新畫布*</div>
<div class="a" style="left:377px;top:96px;width:7px;height:7px;border-radius:4px;background:#505154"></div>
<div class="a" style="left:392px;top:110px;width:717px;height:2px;background:linear-gradient(#48484a,#5a5a5c)"></div>
<div class="a" style="left:1110px;top:89px;width:12px;height:20px;background:linear-gradient(#7b7c80,#6c6d71);border:1px solid #8c8d91;border-radius:2px"></div>
<svg style="left:1113.500px;top:97.500px" width="5" height="3" viewBox="0 0 7 4"><path d="M0 0h7L3.500 4z" fill="#252527"/></svg>

<!-- ===== canvas ===== -->
<div class="a" style="left:275px;top:112px;width:834px;height:408px;background:#303031"></div>
<div class="a" style="left:347px;top:121px;width:690px;height:389px;background:#fff"></div>
<!-- v scrollbar -->
<div class="a" style="left:1109px;top:112px;width:14px;height:408px;background:#5e5f63;border-left:1px solid #55565a"></div>
<div class="a" style="left:1111px;top:113px;width:11px;height:12px;background:#6e6f73;border:1px solid #808185;border-radius:2px"></div>
<svg style="left:1113.500px;top:117.500px" width="5" height="3" viewBox="0 0 7 4"><path d="M0 4h7L3.500 0z" fill="#2a2a2c"/></svg>
<div class="a" style="left:1111px;top:508px;width:11px;height:12px;background:#6e6f73;border:1px solid #808185;border-radius:2px"></div>
<svg style="left:1113.500px;top:512.500px" width="5" height="3" viewBox="0 0 7 4"><path d="M0 0h7L3.500 4z" fill="#2a2a2c"/></svg>
<div class="a" style="left:1110px;top:240px;width:13px;height:152px;background:#6e6f73;border:1px solid #808185;border-radius:2px"></div>
<svg style="left:1113px;top:312px" width="7" height="7" viewBox="0 0 7 7"><path d="M0 .5h7M0 3.500h7M0 6.500h7" stroke="#3a3a3c" stroke-width="1"/></svg>

<!-- ===== status row ===== -->
<div class="a" style="left:274px;top:520px;width:849px;height:15px;background:#626367"></div>
<svg style="left:274px;top:520px" width="118" height="15" viewBox="0 0 118 15"><rect width="118" height="15" fill="#4e4e51"/><rect width="60" height="15" fill="#38383a"/><path d="M0 15L118 1v14z" fill="#242426"/><rect x="59" y="0" width="4" height="15" fill="#66676b"/></svg>
<div class="t num" style="left:277px;top:522px;color:#f0f0f0">54.6</div>
<div class="a" style="left:392px;top:520px;width:73px;height:15px;background:#5e5f63"></div>
<svg style="left:396px;top:519px" width="17" height="17" viewBox="0 0 17 17"><path d="M11 11l4 4" stroke="#333" stroke-width="2.400"/><circle cx="8" cy="8" r="6.300" fill="#e6e6e6" stroke="#8a8a8a" stroke-width="1"/><path d="M4.500 8h7" stroke="#222" stroke-width="2"/></svg>
<svg style="left:420px;top:519px" width="17" height="17" viewBox="0 0 17 17"><path d="M11 11l4 4" stroke="#333" stroke-width="2.400"/><circle cx="8" cy="8" r="6.300" fill="#e6e6e6" stroke="#8a8a8a" stroke-width="1"/><path d="M4.500 8h7M8 4.500v7" stroke="#222" stroke-width="2"/></svg>
<div class="a" style="left:445px;top:520px;width:15px;height:15px;background:#1f1f20;border:3px solid #3a3a3c"></div>
<svg style="left:465px;top:520px" width="116" height="15" viewBox="0 0 116 15"><rect width="116" height="15" fill="#4e4e51"/><path d="M0 0h20v10Q40 15 58 13V15H0zM58 15V10Q72 -3 88 3 102 10 116 15z" fill="#242426"/><rect x="57" y="0" width="4" height="15" fill="#66676b"/></svg>
<div class="t num" style="left:469px;top:522px;color:#f0f0f0">0.0</div>
<svg style="left:586px;top:520px" width="18" height="15" viewBox="0 0 18 15"><path d="M4 13V8.500a5 5 0 0 1 10 0V13" fill="none" stroke="#2e2e30" stroke-width="2.600"/><path d="M0 9h8l-4 5.500z" fill="#2e2e30"/></svg>
<svg style="left:609px;top:520px" width="18" height="15" viewBox="0 0 18 15"><path d="M4 13V8.500a5 5 0 0 1 10 0V13" fill="none" stroke="#2e2e30" stroke-width="2.600"/><path d="M10 9h8l-4 5.500z" fill="#2e2e30"/></svg>
<svg style="left:634px;top:520px" width="15" height="15" viewBox="0 0 23 23" opacity=".5"><g fill="#4a4b4e"><path d="M11.500 1l2 4-3.500-.5z"/><path d="M18 4l-1 4.500-2.500-3z"/><path d="M21.500 10.500l-3.500 2.500.5-4z"/><path d="M19.500 17.500l-4.500-.5 3-2.500z"/><path d="M13 21.500l-2.500-3.500 4 .5z"/><path d="M5.500 19.500l.5-4.500 2.500 3z"/><path d="M1.500 13l3.500-2.500-.5 4z"/><path d="M3.500 5.500l4.500.5-3 2.500z"/></g></svg>
<!-- h scrollbar -->
<div class="a" style="left:655px;top:521px;width:454px;height:13px;background:#5c5d61"></div>
<div class="a" style="left:655px;top:521px;width:12px;height:13px;background:#6e6f73;border:1px solid #808185;border-radius:2px"></div>
<svg style="left:659.5px;top:525px" width="3" height="5" viewBox="0 0 4 7"><path d="M4 0v7L0 3.500z" fill="#2a2a2c"/></svg>
<div class="a" style="left:1096px;top:521px;width:13px;height:13px;background:#6e6f73;border:1px solid #808185;border-radius:2px"></div>
<svg style="left:1101.5px;top:525px" width="3" height="5" viewBox="0 0 4 7"><path d="M0 0v7l4-3.500z" fill="#2a2a2c"/></svg>
<div class="a" style="left:790px;top:521px;width:182px;height:13px;background:#6e6f73;border:1px solid #808185;border-radius:2px"></div>
<svg style="left:877px;top:524px" width="7" height="7" viewBox="0 0 7 7"><path d="M.5 0v7M3.500 0v7M6.500 0v7" stroke="#3a3a3c" stroke-width="1"/></svg>
<div class="a" style="left:1110px;top:520px;width:13px;height:15px;background:#626367"></div>
<!--END:CENTER-->
<!--SECTION:TIMELINE-->
<!-- ===== TIMELINE ===== -->
<div class="a" style="left:274px;top:535px;width:849px;height:1px;background:#7e7f83"></div>
<div class="a hdr" style="left:274px;top:536px;width:824px;height:20px"></div>
<div class="a" style="left:273px;top:535px;width:1px;height:182px;background:#7e7f83"></div><div class="a" style="left:274px;top:536px;width:1px;height:181px;background:#38383a"></div>
<div class="menuic" style="left:275px;top:537px;width:20px"></div>
<svg style="left:279px;top:541px" width="12" height="11" viewBox="0 0 12 11"><path d="M0 .5L4 5.500 0 10.500z" fill="#7c7c7e"/><path d="M6 1.500h5M6 5.500h5M6 9.500h5" stroke="#7c7c7e" stroke-width="1.600"/></svg>
<div class="tab" style="left:296px;top:538px;width:65px;height:18px"></div>
<svg style="left:303px;top:544px" width="18" height="12" viewBox="0 0 19 14"><rect x=".5" y=".5" width="17.500" height="12.500" fill="url(#gtl)" stroke="#e8e8e8"/><path d="M3.500 1v12M6 1v12M8.500 1v12M11 1v12" stroke="#555" stroke-width="1"/><rect x="13.500" y="3" width="2" height="2.200" fill="#22c"/><rect x="13.500" y="8.500" width="2" height="2.200" fill="#22c"/></svg>
<div class="t tl" style="left:328px;top:545px">時間軸</div>
<div class="a" style="left:1099px;top:536px;width:24px;height:181px;background:linear-gradient(#58595c,#48484a 40%,#3e3e40);border-left:1px solid #66676a"></div><div class="a" style="left:1123px;top:536px;width:1px;height:181px;background:#67686b"></div>
<svg style="left:1104px;top:705px" width="16" height="8" viewBox="0 0 16 8"><path d="M0 0l8 4 8-4-8 8z" fill="#8e8e90"/></svg>
<div class="a pn" style="left:275px;top:556px;width:823px;height:31px"></div>
<div class="t snum" style="left:294.3px;top:566.500px;color:#f4f4f4">1</div>
<div class="t snum" style="left:335.3px;top:566.500px;color:#f4f4f4">/</div>
<div class="t snum" style="left:377.5px;top:566.500px;color:#f4f4f4">1</div>
<div class="t snum" style="left:418.7px;top:566.500px;color:#f4f4f4">/</div>
<div class="t snum" style="left:460.500px;top:566.500px;color:#f4f4f4">72</div>
<svg style="left:515px;top:567px" width="18" height="13" viewBox="0 0 19 14"><rect x=".5" y=".5" width="17.500" height="12.500" fill="url(#gtl)" stroke="#e8e8e8"/><path d="M3.500 1v12M6 1v12M8.500 1v12M11 1v12" stroke="#777" stroke-width="1"/><rect x="13.500" y="3" width="2" height="2.200" fill="#444"/><rect x="13.500" y="8.500" width="2" height="2.200" fill="#444"/></svg>
<svg style="left:539px;top:566px" width="16" height="14" viewBox="0 0 16 14"><path d="M0 0l3 3M3 0L0 3" stroke="#333" stroke-width=".8"/><rect x="2" y="2.500" width="13.500" height="10.500" fill="#ececec"/><path d="M4.500 3v10M7 3v10M9.500 3v10" stroke="#444" stroke-width="1.200"/><rect x="12" y="5" width="2" height="2" fill="#333"/><rect x="12" y="9" width="2" height="2" fill="#333"/></svg>
<svg style="left:574px;top:565px" width="18" height="18" viewBox="0 0 17 17"><path d="M11 11l4.500 4.500" stroke="#333" stroke-width="2.600"/><circle cx="7.500" cy="7.500" r="6.600" fill="#fbfbfb" stroke="#9a9a9a" stroke-width=".8"/><path d="M4 7.500h7" stroke="#222" stroke-width="2.200"/></svg>
<svg style="left:597px;top:565px" width="18" height="18" viewBox="0 0 17 17"><path d="M11 11l4.500 4.500" stroke="#333" stroke-width="2.600"/><circle cx="7.500" cy="7.500" r="6.600" fill="#fbfbfb" stroke="#9a9a9a" stroke-width=".8"/><path d="M4 7.500h7M7.500 4v7" stroke="#222" stroke-width="2.200"/></svg>
<svg style="left:635px;top:566px" width="14" height="14" viewBox="0 0 14 14"><path d="M1.500 0v14" stroke="#525356" stroke-width="2.400"/><path d="M13.500 0v14L3.500 7z" fill="#525356"/></svg>
<svg style="left:657px;top:566px" width="17" height="14" viewBox="0 0 17 14"><path d="M8 0v4h9v6H8v4L0 7z" fill="#525356"/></svg>
<svg style="left:683px;top:566px" width="13" height="15" viewBox="0 0 13 15"><path d="M0 0l13 7.500L0 15z" fill="#2c2c2e"/></svg>
<svg style="left:705px;top:566px" width="17" height="14" viewBox="0 0 17 14"><path d="M9 0v4H0v6h9v4l8-7z" fill="#2c2c2e"/></svg>
<svg style="left:730px;top:566px" width="14" height="14" viewBox="0 0 14 14"><path d="M12.500 0v14" stroke="#2c2c2e" stroke-width="2.400"/><path d="M.5 0v14l10-7z" fill="#2c2c2e"/></svg>
<div class="a" style="left:760px;top:562px;width:24px;height:24px;background:#58595c;border:1px solid #4a4b4e;border-radius:2px"></div>
<svg style="left:763px;top:565px" width="18" height="18" viewBox="0 0 18 18"><path d="M3 9V6.500q0-2.500 2.500-2.500H12M15 9v2.500q0 2.500-2.500 2.500H6" fill="none" stroke="#2c2c2e" stroke-width="2.600"/><path d="M11 0l5.500 4L11 8zM7 10l-5.500 4L7 18z" fill="#2c2c2e"/></svg>
<svg style="left:798px;top:564px" width="20" height="19" viewBox="0 0 20 19"><rect x="0" y="4" width="15" height="14" fill="#c8c8ca"/><rect x="3.500" y="1" width="16" height="15" fill="#f4f0f2" stroke="#d8d8da" stroke-width="1"/><rect x="3.500" y="1" width="16" height="3.500" fill="#dcdcde"/><path d="M6 2.800h1.500M9 2.800h1.500M12 2.800h1.500M15 2.800h1.500" stroke="#444" stroke-width="1.200"/><path d="M4 5h15M4 14.500h15" stroke="#e0508c" stroke-width="1"/></svg>
<svg style="left:824px;top:566px" width="17" height="16" viewBox="0 0 17 16" opacity=".7"><rect x=".5" y=".5" width="16" height="15" fill="#7f8084" stroke="#8a8b8f"/><rect x=".5" y=".5" width="16" height="3.500" fill="#8c8d91"/><path d="M3 2.200h1.500M6 2.200h1.500M9 2.200h1.500M12 2.200h1.500" stroke="#5a5b5e" stroke-width="1.200"/></svg>
<svg style="left:846px;top:566px" width="19" height="17" viewBox="0 0 19 17" opacity=".7"><rect x=".5" y=".5" width="16" height="15" fill="#7f8084" stroke="#8a8b8f"/><rect x=".5" y=".5" width="16" height="3.500" fill="#8c8d91"/><path d="M3 2.200h1.500M6 2.200h1.500M9 2.200h1.500M12 2.200h1.500" stroke="#5a5b5e" stroke-width="1.200"/><circle cx="12" cy="13" r="2.200" fill="none" stroke="#5a5b5e" stroke-width="1.200"/><circle cx="16" cy="13" r="2.200" fill="none" stroke="#5a5b5e" stroke-width="1.200"/></svg>
<svg style="left:869px;top:566px" width="19" height="17" viewBox="0 0 19 17" opacity=".7"><rect x=".5" y=".5" width="16" height="15" fill="#7f8084" stroke="#8a8b8f"/><rect x=".5" y=".5" width="16" height="3.500" fill="#8c8d91"/><path d="M3 2.200h1.500M6 2.200h1.500M9 2.200h1.500M12 2.200h1.500" stroke="#5a5b5e" stroke-width="1.200"/><circle cx="11" cy="13" r="2.200" fill="none" stroke="#5a5b5e" stroke-width="1.200"/><path d="M14 13h4" stroke="#5a5b5e" stroke-width="1.200"/></svg>
<svg style="left:905px;top:564px" width="19" height="19" viewBox="0 0 19 19"><defs><linearGradient id="gon" x1="0" y1="0" x2="1" y2="1"><stop offset="0" stop-color="#fff"/><stop offset="1" stop-color="#9a9a9c"/></linearGradient></defs><rect x="3.500" y="3.500" width="15" height="15" fill="#55565a" stroke="#cfcfd1" stroke-width="1"/><rect x=".5" y=".5" width="15" height="15" fill="url(#gon)" stroke="#f4f4f4" stroke-width="1"/><rect x="5" y="5" width="9" height="9" fill="#8e8f92" opacity=".8"/></svg>
<div class="a" style="left:275px;top:587px;width:823px;height:1px;background:#3c3d40"></div>
<div class="a" style="left:276px;top:587px;width:160px;height:26px;background:linear-gradient(#717276,#5c5d61);border:1px solid #434447;border-radius:3px;box-shadow:inset 0 1px 0 #808185"></div>
<div class="t" style="left:326px;top:593px;font-size:12px;color:#fff;letter-spacing:-.6px">時間軸1</div>
<svg style="left:420px;top:597px" width="12" height="7" viewBox="0 0 12 7"><path d="M0 0h12L6 7z" fill="#2a2a2c"/></svg>
<div class="a" style="left:436px;top:588px;width:4px;height:26px;background:repeating-linear-gradient(#48494c 0 1px,#77787c 1px 2px)"></div>
<div class="a" style="left:440px;top:588px;width:1px;height:129px;background:#3c3d40"></div>
<div class="a" style="left:441px;top:588px;width:8px;height:115px;background:#5b5c5f"></div>
<div class="a" style="left:449px;top:588px;width:12px;height:26px;background:#2a2ab4"></div>
<div class="a" style="left:449px;top:614px;width:649px;height:89px;background:#5b5c5f"></div>
<div class="a" style="left:462px;top:614px;width:622px;height:89px;background:repeating-linear-gradient(90deg,#606165 0,#606165 13.82px,#6c6d71 13.82px,#6c6d71 14.82px);background-position:-0.3px 0"></div>
<div class="a" style="left:1084px;top:614px;width:14px;height:89px;background:#6a6b6f"></div>
<div class="a" style="left:461px;top:588px;width:16px;height:115px;background:#c9363e"></div>
<div class="a" style="left:461px;top:615px;width:22px;height:63px;background:linear-gradient(90deg,#a0454b 0,#9a484d 60%,rgba(130,84,88,.6) 80%,rgba(96,97,101,0) 100%)"></div>
<div class="a" style="left:461px;top:614px;width:1px;height:89px;background:#1a1a8c"></div>
<div class="a" style="left:476.3px;top:609px;width:1px;height:5px;background:#2c2d2f"></div>
<div class="a" style="left:491.1px;top:609px;width:1px;height:5px;background:#2c2d2f"></div>
<div class="a" style="left:506.0px;top:609px;width:1px;height:5px;background:#2c2d2f"></div>
<div class="a" style="left:520.8px;top:609px;width:1px;height:5px;background:#2c2d2f"></div>
<div class="a" style="left:535.6px;top:609px;width:1px;height:5px;background:#2c2d2f"></div>
<div class="a" style="left:550.4px;top:599px;width:1px;height:104px;background:#2c2d2f"></div>
<div class="a" style="left:565.2px;top:609px;width:1px;height:5px;background:#2c2d2f"></div>
<div class="a" style="left:580.1px;top:609px;width:1px;height:5px;background:#2c2d2f"></div>
<div class="a" style="left:594.9px;top:609px;width:1px;height:5px;background:#2c2d2f"></div>
<div class="a" style="left:609.7px;top:609px;width:1px;height:5px;background:#2c2d2f"></div>
<div class="a" style="left:624.5px;top:609px;width:1px;height:5px;background:#2c2d2f"></div>
<div class="a" style="left:639.3px;top:599px;width:1px;height:104px;background:#2c2d2f"></div>
<div class="a" style="left:654.2px;top:609px;width:1px;height:5px;background:#2c2d2f"></div>
<div class="a" style="left:669.0px;top:609px;width:1px;height:5px;background:#2c2d2f"></div>
<div class="a" style="left:683.8px;top:609px;width:1px;height:5px;background:#2c2d2f"></div>
<div class="a" style="left:698.6px;top:609px;width:1px;height:5px;background:#2c2d2f"></div>
<div class="a" style="left:713.4px;top:609px;width:1px;height:5px;background:#2c2d2f"></div>
<div class="a" style="left:728.3px;top:599px;width:1px;height:104px;background:#2c2d2f"></div>
<div class="a" style="left:743.1px;top:609px;width:1px;height:5px;background:#2c2d2f"></div>
<div class="a" style="left:757.9px;top:609px;width:1px;height:5px;background:#2c2d2f"></div>
<div class="a" style="left:772.7px;top:609px;width:1px;height:5px;background:#2c2d2f"></div>
<div class="a" style="left:787.5px;top:609px;width:1px;height:5px;background:#2c2d2f"></div>
<div class="a" style="left:802.4px;top:609px;width:1px;height:5px;background:#2c2d2f"></div>
<div class="a" style="left:817.2px;top:599px;width:1px;height:104px;background:#2c2d2f"></div>
<div class="a" style="left:832.0px;top:609px;width:1px;height:5px;background:#2c2d2f"></div>
<div class="a" style="left:846.8px;top:609px;width:1px;height:5px;background:#2c2d2f"></div>
<div class="a" style="left:861.6px;top:609px;width:1px;height:5px;background:#2c2d2f"></div>
<div class="a" style="left:876.5px;top:609px;width:1px;height:5px;background:#2c2d2f"></div>
<div class="a" style="left:891.3px;top:609px;width:1px;height:5px;background:#2c2d2f"></div>
<div class="a" style="left:906.1px;top:599px;width:1px;height:104px;background:#2c2d2f"></div>
<div class="a" style="left:920.9px;top:609px;width:1px;height:5px;background:#2c2d2f"></div>
<div class="a" style="left:935.7px;top:609px;width:1px;height:5px;background:#2c2d2f"></div>
<div class="a" style="left:950.6px;top:609px;width:1px;height:5px;background:#2c2d2f"></div>
<div class="a" style="left:965.4px;top:609px;width:1px;height:5px;background:#2c2d2f"></div>
<div class="a" style="left:980.2px;top:609px;width:1px;height:5px;background:#2c2d2f"></div>
<div class="a" style="left:995.0px;top:599px;width:1px;height:104px;background:#2c2d2f"></div>
<div class="a" style="left:1009.8px;top:609px;width:1px;height:5px;background:#2c2d2f"></div>
<div class="a" style="left:1024.7px;top:609px;width:1px;height:5px;background:#2c2d2f"></div>
<div class="a" style="left:1039.5px;top:609px;width:1px;height:5px;background:#2c2d2f"></div>
<div class="a" style="left:1054.3px;top:609px;width:1px;height:5px;background:#2c2d2f"></div>
<div class="a" style="left:1069.1px;top:609px;width:1px;height:5px;background:#2c2d2f"></div>
<div class="a" style="left:1083.9px;top:599px;width:1px;height:104px;background:#2c2d2f"></div>
<div class="t snum" style="left:453.8px;top:600px;color:#f4c8c8">1</div>
<div class="t snum" style="left:498.3px;top:600px;color:#f4f4f4">4</div>
<div class="t snum" style="left:542.7px;top:600px;color:#f4f4f4">7</div>
<div class="t snum" style="left:587.2px;top:600px;color:#f4f4f4">10</div>
<div class="t snum" style="left:631.6px;top:600px;color:#f4f4f4">13</div>
<div class="t snum" style="left:676.1px;top:600px;color:#f4f4f4">16</div>
<div class="t snum" style="left:720.6px;top:600px;color:#f4f4f4">19</div>
<div class="t snum" style="left:765.0px;top:600px;color:#f4f4f4">22</div>
<div class="t snum" style="left:809.5px;top:600px;color:#f4f4f4">25</div>
<div class="t snum" style="left:853.9px;top:600px;color:#f4f4f4">28</div>
<div class="t snum" style="left:898.4px;top:600px;color:#f4f4f4">31</div>
<div class="t snum" style="left:942.9px;top:600px;color:#f4f4f4">34</div>
<div class="t snum" style="left:987.3px;top:600px;color:#f4f4f4">37</div>
<div class="t snum" style="left:1031.8px;top:600px;color:#f4f4f4">40</div>
<div class="t snum" style="left:1076.2px;top:600px;color:#f4f4f4">43</div>
<div class="t snum" style="left:453.500px;top:586px;font-size:12.500px;font-weight:bold;color:#fff">1</div>
<div class="t snum" style="left:809px;top:586px;color:#f4f4f4">1</div>
<div class="a" style="left:817.2px;top:594px;width:1px;height:6px;background:#2c2d2f"></div>
<div class="a" style="left:275px;top:614px;width:809px;height:1px;background:#2a2b2d"></div><div class="a" style="left:441px;top:615px;width:643px;height:1px;background:#48494c"></div>
<div class="a" style="left:462px;top:622px;width:622px;height:1px;background:#2a2b2d"></div>
<div class="a" style="left:275px;top:645px;width:809px;height:1px;background:#303133"></div>
<div class="a" style="left:462px;top:647px;width:622px;height:1px;background:#2a2b2d"></div>
<div class="a" style="left:462px;top:654px;width:622px;height:1px;background:#2a2b2d"></div>
<div class="a" style="left:275px;top:677px;width:165px;height:1px;background:#3a3b3d"></div>
<div class="a" style="left:462px;top:677px;width:622px;height:2px;background:#242527"></div>
<div class="a" style="left:468.500px;top:615px;width:2px;height:7px;background:#1e1e20"></div>
<div class="a" style="left:468.500px;top:648px;width:2px;height:6px;background:#1e1e20"></div>
<div class="a" style="left:298px;top:615px;width:1px;height:62px;background:#3c3d40"></div>
<div class="a" style="left:299px;top:615px;width:141px;height:30px;background:linear-gradient(#67818f,#5f7989)"></div>
<svg style="left:279px;top:626px" width="16" height="10" viewBox="0 0 16 10"><path d="M.5 5Q8-3 15.500 5 8 13 .5 5z" fill="#f6f6f6" stroke="#222" stroke-width=".8"/><circle cx="8" cy="5" r="3.500" fill="#111"/><circle cx="6.800" cy="3.800" r="1" fill="#ddd"/></svg>
<svg style="left:279px;top:658px" width="16" height="10" viewBox="0 0 16 10"><path d="M.5 5Q8-3 15.500 5 8 13 .5 5z" fill="#f6f6f6" stroke="#222" stroke-width=".8"/><circle cx="8" cy="5" r="3.500" fill="#111"/><circle cx="6.800" cy="3.800" r="1" fill="#ddd"/></svg>
<svg style="left:307px;top:623px" width="17" height="16" viewBox="0 0 17 16"><rect x=".5" y=".5" width="16" height="15" fill="#f4f4f4" stroke="#c8c8ca"/><path d="M1.500 14V11l4-7.500 3 5 2.500-3.500 4.500 6v3z" fill="#333"/></svg>
<div class="t" style="left:334px;top:623px;font-size:12px;color:#fff">圖層 <span style="font-family:'Liberation Serif',serif;font-size:13px">1</span></div>
<svg style="left:307px;top:653px" width="16" height="20" viewBox="0 0 16 20"><path d="M.5.500h10l5 5v14H.5z" fill="#fafafa" stroke="#d0d0d2" stroke-width=".8"/><path d="M10.500.500v5h5z" fill="#c8c8ca"/></svg>
<div class="t" style="left:334px;top:655px;font-size:12px;color:#fff">紙張</div>
<div class="a" style="left:441px;top:703px;width:657px;height:14px;background:#626367"></div>
<div class="a" style="left:454px;top:704px;width:618px;height:12px;background:#5a5b5f"></div>
<div class="a" style="left:442px;top:704px;width:12px;height:12px;background:#6e6f73;border:1px solid #808185;border-radius:2px"></div>
<svg style="left:446.5px;top:708px" width="3" height="5" viewBox="0 0 4 7"><path d="M4 0v7L0 3.500z" fill="#2a2a2c"/></svg>
<div class="a" style="left:1072px;top:704px;width:12px;height:12px;background:#6e6f73;border:1px solid #808185;border-radius:2px"></div>
<svg style="left:1076.5px;top:708px" width="3" height="5" viewBox="0 0 4 7"><path d="M0 0v7l4-3.500z" fill="#2a2a2c"/></svg>
<div class="a" style="left:526px;top:704px;width:251px;height:12px;background:#6e6f73;border:1px solid #808185;border-radius:2px"></div>
<svg style="left:648px;top:707px" width="7" height="7" viewBox="0 0 7 7"><path d="M.5 0v7M3.500 0v7M6.500 0v7" stroke="#3a3a3c" stroke-width="1"/></svg>
<!--END:TIMELINE-->
<!--SECTION:RIGHT-->
<!-- ===== RIGHT: strips ===== -->
<div class="a dk" style="left:1123px;top:57px;width:17px;height:24px"></div>
<div class="a" style="left:1123px;top:81px;width:17px;height:636px;background:linear-gradient(90deg,#3a3a3c 0,#505052 50%,#636467 100%)"></div>
<div class="a" style="left:1140px;top:57px;width:2px;height:660px;background:linear-gradient(90deg,#2e2e30,#3e3e41)"></div>
<div class="a dk" style="left:1142px;top:57px;width:207px;height:24px"></div>
<div class="a" style="left:1142px;top:81px;width:207px;height:1px;background:#a4a4a6"></div>
<svg style="left:1126px;top:62px" width="13" height="15" viewBox="0 0 13 15"><path d="M6.500 0L0 7.500 6.500 15 4.800 7.500zM12.500 0L6 7.500 12.500 15 10.800 7.500z" fill="#8c8c8e"/></svg>
<svg style="left:1143px;top:62px" width="13" height="15" viewBox="0 0 13 15"><path d="M0 0L6.500 7.500 0 15 1.700 7.500zM6 0L12.500 7.500 6 15 7.700 7.500z" fill="#8c8c8e"/></svg>

<!-- ===== NAVIGATOR ===== -->
<div class="a hdr" style="left:1142px;top:82px;width:207px;height:20px"></div><div class="a pn" style="left:1142px;top:102px;width:205px;height:6px"></div>
<div class="menuic" style="left:1142px;top:84px;width:20px;height:18px"></div>
<svg style="left:1146px;top:88px" width="12" height="11" viewBox="0 0 12 11"><path d="M0 .5L4 5.500 0 10.500z" fill="#7c7c7e"/><path d="M6 1.500h5M6 5.500h5M6 9.500h5" stroke="#7c7c7e" stroke-width="1.600"/></svg>
<div class="tab" style="left:1163px;top:84px;width:66px;height:18px"></div>
<svg style="left:1169px;top:89px" width="21" height="16" viewBox="0 0 21 16"><rect x="6.500" y="5" width="13.500" height="10" fill="#6a6b6f" stroke="#f2f2f2" stroke-width="1.400"/><rect x="3.500" y="2.500" width="13.500" height="10" fill="#6a6b6f" stroke="#f2f2f2" stroke-width="1.400"/><rect x="1" y="1" width="12.500" height="9" fill="#fff" stroke="#e8141c" stroke-width="1.800"/></svg>
<div class="t tl" style="left:1195px;top:91px">導航器</div>
<div class="a" style="left:1142px;top:108px;width:207px;height:67px;background:#2f2f30"></div>
<div class="a" style="left:1203px;top:118px;width:84px;height:46px;background:#fff"></div>
<div class="a" style="left:1194px;top:117px;width:102px;height:49px;border:1px solid #e0141c;border-top-width:2px"></div>
<!-- sliders -->
<svg style="left:1146px;top:183px" width="75" height="16" viewBox="0 0 75 16"><rect width="75" height="16" fill="#58595d"/><path d="M0 16L75 1v15z" fill="#262627"/><path d="M.5.500h74v15H.5z" fill="none" stroke="#3a3a3c"/></svg>
<div class="t num" style="left:1149.500px;top:185px;color:#f2f2f2">54.6</div>
<svg style="left:1146px;top:206px" width="75" height="16" viewBox="0 0 75 16"><rect width="75" height="16" fill="#58595d"/><path d="M0 16Q30 15 42 5 52 -2 62 5 72 15 75 16z" fill="#262627"/><path d="M0 0L5 6V16H0z" fill="#262627"/><path d="M.5.500h74v15H.5z" fill="none" stroke="#3a3a3c"/></svg>
<div class="t num" style="left:1153px;top:208px;color:#f2f2f2">0.0</div>
<div class="a" style="left:1182px;top:179px;width:5px;height:47px;background:#75767a;border:1px solid #5e5f63"></div>
<!-- zoom out/in -->
<svg style="left:1227px;top:179px" width="22" height="24" viewBox="0 0 22 24"><path d="M14 15l5 6" stroke="#3a3a3c" stroke-width="3" stroke-linecap="round"/><circle cx="10" cy="10" r="8.200" fill="#fff" stroke="#bdbdbf" stroke-width="1"/><circle cx="10" cy="10" r="5.800" fill="#fff" stroke="#2e2e30" stroke-width="1.500"/><path d="M6.500 10h7" stroke="#1a1a1c" stroke-width="2.400"/></svg>
<svg style="left:1250.500px;top:179px" width="22" height="24" viewBox="0 0 22 24"><path d="M14 15l5 6" stroke="#3a3a3c" stroke-width="3" stroke-linecap="round"/><circle cx="10" cy="10" r="8.200" fill="#fff" stroke="#bdbdbf" stroke-width="1"/><circle cx="10" cy="10" r="5.800" fill="#fff" stroke="#2e2e30" stroke-width="1.500"/><path d="M6.500 10h7M10 6.500v7" stroke="#1a1a1c" stroke-width="2.400"/></svg>
<div class="a" style="left:1273px;top:179px;width:23px;height:23px;background:#262627;border:4px solid #262627;box-shadow:inset 0 0 0 2px #58595d"></div>
<!-- fit icons -->
<svg style="left:1301px;top:180px" width="23" height="22" viewBox="0 0 23 22"><rect x="0" y="0" width="17" height="13" fill="#fafafa"/><rect x="0" y="0" width="17" height="3" fill="#262627"/><rect x="6" y="9" width="17" height="13" fill="#fafafa"/><rect x="6" y="9" width="17" height="2" fill="#bbb"/><path d="M9 5l11 12" stroke="#111" stroke-width="2.200"/><path d="M7 3l6 1.500-4 4zM22 19l-6-1.500 4-4z" fill="#111"/></svg>
<svg style="left:1325px;top:180px;z-index:3" width="24" height="22" viewBox="0 0 24 22"><rect x="0" y="0" width="24" height="22" fill="#fafafa"/><rect x="0" y="0" width="24" height="3" fill="#262627"/><path d="M5 6l14 12" stroke="#111" stroke-width="2.400"/><path d="M2.500 4l7 1.500-4.500 5zM21.500 20l-7-1.500 4.500-5z" fill="#111"/></svg>
<!-- rotate -->
<svg style="left:1226px;top:205px" width="24" height="20" viewBox="0 0 24 20"><path d="M22.500 19.500C24 5 15 1.500 11 2.500 6.500 3.500 5 8 5.500 13" fill="none" stroke="#1e1e20" stroke-width="3.800"/><path d="M0 10.500l11.500 1.500L5 20z" fill="#1e1e20"/></svg>
<svg style="left:1249px;top:205px" width="24" height="20" viewBox="0 0 24 20"><path d="M1.500 19.500C0 5 9 1.500 13 2.500 17.500 3.500 19 8 18.500 13" fill="none" stroke="#1e1e20" stroke-width="3.800"/><path d="M24 10.500L12.500 12 19 20z" fill="#1e1e20"/></svg>
<svg style="left:1274px;top:204px" width="22" height="22" viewBox="0 0 23 23" opacity=".55"><g fill="#55565a"><path d="M11.500 1l2 5-4-.5z"/><path d="M18.500 4l-1.500 5-3-3.500z"/><path d="M22 11l-4.500 2.500.5-4.500z"/><path d="M19.500 18.500l-5-1.500 3.500-3z"/><path d="M12.500 22l-2.500-4.500 4.500.5z"/><path d="M5 19.500l1-5 3 3.500z"/><path d="M1 12.500l4.500-2.500-.5 4.500z"/><path d="M3.500 5l5 1.500-3.500 3z"/></g></svg>
<!-- flip H / V -->
<svg style="left:1301px;top:203px" width="23" height="23" viewBox="0 0 23 23"><path d="M5 9a7 7 0 0 1 13-1" fill="none" stroke="#2a2a2c" stroke-width="3"/><path d="M13.500 7.500h8l-1-6z" fill="#2a2a2c"/><path d="M11.500 6v17" stroke="#3a3a3c" stroke-width="1.400" stroke-dasharray="2 1.600"/><path d="M0 11l9 6-9 6z" fill="#fff"/><path d="M23 11l-9 6 9 6z" fill="#3a3a3c"/></svg>
<svg style="left:1325px;top:203px;z-index:3" width="24" height="23" viewBox="0 0 24 23"><path d="M11 4a7 7 0 1 0 1 13" fill="none" stroke="#2a2a2c" stroke-width="3"/><path d="M8.500 .5l6 3.500-6 4.500z" fill="#2a2a2c"/><path d="M8 11.500h16" stroke="#3a3a3c" stroke-width="1.400" stroke-dasharray="2 1.600"/><path d="M12 0h12l-6 9z" fill="#3a3a3c"/><path d="M12 23h12l-6-9z" fill="#fff"/></svg>

<!-- ===== COLOUR WHEEL PANEL ===== -->
<div class="a" style="left:1142px;top:228px;width:207px;height:1px;background:#85868a"></div>
<div class="a hdr" style="left:1142px;top:229px;width:207px;height:19px"></div><div class="a pn" style="left:1142px;top:248px;width:205px;height:6px"></div>
<div class="menuic" style="left:1142px;top:230px;width:20px;height:18px"></div>
<svg style="left:1146px;top:234px" width="12" height="11" viewBox="0 0 12 11"><path d="M0 .5L4 5.500 0 10.500z" fill="#7c7c7e"/><path d="M6 1.500h5M6 5.500h5M6 9.500h5" stroke="#7c7c7e" stroke-width="1.600"/></svg>
<div class="tabi" style="left:1163px;top:231px;width:76px;height:17px"></div>
<svg style="left:1168px;top:233px" width="26" height="14" viewBox="0 0 26 14"><path d="M1 13q12-2 20-12" fill="none" stroke="#77787c" stroke-width="1.600"/><path d="M3 13q5-5 11 0" fill="none" stroke="#6e6f73" stroke-width="1.200"/></svg>
<div class="t tl" style="left:1196px;top:236px;color:#8b8c90">圖層屬性</div>
<div class="tab" style="left:1240px;top:231px;width:56px;height:17px"></div>
<div class="a" style="left:1246px;top:233px;width:19px;height:19px;border-radius:50%;background:conic-gradient(from 300deg,#f00,#ff0,#0f0,#0ff,#00f,#f0f,#f00);box-shadow:0 1px 0 1px #f4f4f4"></div>
<div class="a" style="left:1252px;top:239px;width:7px;height:7px;border-radius:50%;background:#8a8b8f"></div>
<div class="t tl" style="left:1272px;top:236px">色環</div>
<div class="a" style="left:1142px;top:254px;width:1px;height:130px;background:#4a4b4e"></div>
<!-- wheel -->
<div class="a" style="left:1196px;top:260px;width:100px;height:100px;border-radius:50%;background:conic-gradient(from 300deg,#f00,#ff0,#0f0,#0ff,#00f,#f0f,#f00);box-shadow:0 0 0 1px #2e2e30"></div>
<div class="a" style="left:1209px;top:273px;width:74px;height:74px;border-radius:50%;background:#6a6b6f;box-shadow:0 0 0 1px #2e2e30"></div>
<svg style="left:1196px;top:260px" width="100" height="100" viewBox="0 0 100 100"><defs><linearGradient id="gtr1" x1="30" y1="27" x2="30" y2="74" gradientUnits="userSpaceOnUse"><stop offset="0" stop-color="#fff"/><stop offset="1" stop-color="#000"/></linearGradient><linearGradient id="gtr2" x1="30" y1="50" x2="83" y2="50" gradientUnits="userSpaceOnUse"><stop offset="0" stop-color="#f00a1e" stop-opacity="0"/><stop offset="1" stop-color="#f00a1e"/></linearGradient></defs><path d="M30.500 27L83.500 50.500 29.500 74z" fill="url(#gtr1)"/><path d="M30.500 27L83.500 50.500 29.500 74z" fill="url(#gtr2)" stroke="#3a3a3c" stroke-width=".6"/><rect x="24.500" y="72" width="7" height="7" fill="#d8d8d8" stroke="#fff" stroke-width="1.400"/><rect x="23.500" y="71" width="9" height="9" fill="none" stroke="#222" stroke-width=".7"/><rect x="26.500" y="74" width="3" height="3" fill="none" stroke="#222" stroke-width=".7"/><g transform="rotate(25 9.500 31)"><rect x="1.500" y="29.500" width="16" height="3.600" fill="none" stroke="#1e1e20" stroke-width="1"/></g></svg>
<!-- swatches -->
<div class="a" style="left:1157px;top:344px;width:23px;height:23px;background:#fff;border:1px solid #dcdcdc"></div>
<div class="a" style="left:1144px;top:331px;width:24px;height:24px;background:#000;border:2px solid #8ccbf2;box-shadow:inset 0 0 0 1px #0c2c4c,inset 0 0 0 2px #fff"></div>
<div class="a" style="left:1144px;top:369px;width:36px;height:10px;background:repeating-conic-gradient(#fff 0 25%,#8a8a8a 0 50%) 0 0/10px 10px;border:1px solid #5a5b5e"></div>
<!-- HLS -->
<div class="a" style="left:1203px;top:367px;width:10px;height:10px;background:#15153a"></div>
<div class="t" style="left:1204px;top:367px;font-size:10px;font-weight:bold;color:#e8e8f4;transform:scaleX(1.150);transform-origin:0 0">H</div>
<div class="t num" style="left:1218.500px;top:365px;color:#eee">355</div>
<div class="a" style="left:1241px;top:367px;width:10px;height:10px;background:#15153a"></div>
<div class="t" style="left:1243px;top:367px;font-size:10px;font-weight:bold;color:#e8e8f4;transform:scaleX(1.150);transform-origin:0 0">L</div>
<div class="t num" style="left:1264.500px;top:365px;color:#eee">0</div>
<div class="a" style="left:1280px;top:367px;width:10px;height:10px;background:#15153a"></div>
<div class="t" style="left:1281px;top:367px;font-size:10px;font-weight:bold;color:#e8e8f4;transform:scaleX(1.150);transform-origin:0 0">S</div>
<div class="t num" style="left:1303px;top:365px;color:#eee">0</div>
<div class="a" style="left:1321px;top:356px;width:23px;height:23px;border-radius:50%;background:conic-gradient(from 300deg,#f00,#ff0,#0f0,#0ff,#00f,#f0f,#f00)"></div>
<div class="a" style="left:1325px;top:360px;width:15px;height:15px;border-radius:50%;background:#6a6b6f"></div>
<div class="a" style="left:1327px;top:362px;width:11px;height:11px;background:linear-gradient(135deg,#e64a3c,#3c0a0a 70%,#000)"></div>
<!-- ===== LAYER PANEL ===== -->
<div class="a" style="left:1142px;top:383px;width:207px;height:1px;background:#85868a"></div>
<div class="a hdr" style="left:1142px;top:384px;width:207px;height:19px"></div><div class="a pn" style="left:1142px;top:403px;width:205px;height:7px"></div>
<div class="menuic" style="left:1142px;top:386px;width:20px;height:17px"></div>
<svg style="left:1146px;top:389px" width="12" height="11" viewBox="0 0 12 11"><path d="M0 .5L4 5.500 0 10.500z" fill="#7c7c7e"/><path d="M6 1.500h5M6 5.500h5M6 9.500h5" stroke="#7c7c7e" stroke-width="1.600"/></svg>
<div class="tab" style="left:1163px;top:386px;width:56px;height:17px"></div>
<svg style="left:1170px;top:389px" width="21" height="19" viewBox="0 0 21 19"><g stroke="#2a2a2c" stroke-width=".7"><path d="M1 13.500l9.500-3.500 9.500 3.500-9.500 4z" fill="#fff"/><path d="M1 10.500l9.500-3.500 9.500 3.500-9.500 4z" fill="#e8e8e8"/><path d="M1 7.500l9.500-3.500 9.500 3.500-9.500 4z" fill="#fff"/><path d="M1 4.500L10.500 1l9.500 3.500-9.500 4z" fill="#f4f4f4"/></g></svg>
<div class="t tl" style="left:1196px;top:392px">圖層</div>
<div class="tabi" style="left:1220px;top:386px;width:32px;height:17px;background:#6c6d71"></div>
<svg style="left:1226px;top:388px" width="21" height="15" viewBox="0 0 21 15"><rect x="0" y="0" width="11" height="15" fill="#a6a7aa"/><rect x="11" y="0" width="9" height="8" fill="#48494c"/><path d="M3.500 7a4.300 4.300 0 1 0 4.300-3.500" fill="none" stroke="#2a2a2c" stroke-width="2.200"/><path d="M8.500 1L5 3.800l3.800 2.400z" fill="#2a2a2c"/><path d="M18.500 10a4 4 0 1 1-4-4" fill="none" stroke="#2a2a2c" stroke-width="2"/><path d="M13.500 3.500l3.500 2.700-3.700 2.300z" fill="#2a2a2c"/></svg>
<div class="tabi" style="left:1253px;top:386px;width:33px;height:17px;background:#626367"></div>
<svg style="left:1260px;top:390px" width="20" height="12" viewBox="0 0 20 12"><path d="M1 5l16-4 1 3L2 8z" fill="#3c3d40"/><path d="M4 4.300l2 2.500M8 3.300l2 2.500M12 2.300l2 2.500" stroke="#808185" stroke-width="1.400"/><rect x="2" y="8" width="16" height="4" fill="#47484b"/></svg>
<!-- blend mode -->
<div class="a" style="left:1144px;top:411px;width:97px;height:21px;background:linear-gradient(#6e6f73,#5d5e62);border:1px solid #4a4b4e;border-radius:3px;box-shadow:inset 0 1px 0 #7c7d81"></div>
<div class="t" style="left:1173px;top:414px;font-size:12px;color:#fff">普通</div>
<svg style="left:1227px;top:418px" width="11" height="7" viewBox="0 0 11 7"><path d="M0 0h11L5.500 7z" fill="#2a2a2c"/></svg>
<!-- opacity -->
<div class="a" style="left:1249px;top:416px;width:49px;height:11px;background:linear-gradient(90deg,rgba(244,244,244,0),#f4f4f4 95%),repeating-conic-gradient(#f4f4f4 0 25%,#9a9a9c 0 50%) 0 0/10px 10px;border:1px solid #4a4b4e"></div>
<div class="a" style="left:1297px;top:409px;width:5px;height:24px;background:#5c5d61;border:1px solid #505155"></div>
<div class="t num" style="left:1308.500px;top:414px;color:#f2f2f2">100</div>
<svg style="left:1331px;top:414px" width="11" height="16" viewBox="0 0 11 16"><path d="M0 5.500h11L5.500 0zM0 10h11l-5.500 5.500z" fill="#2a2a2c"/></svg>
<div class="a" style="left:1346px;top:410px;width:1px;height:307px;background:#2e2e30"></div>
<!-- icon row -->
<svg style="left:1173px;top:435px" width="24" height="22" viewBox="0 0 24 22"><defs><linearGradient id="gbw" x1="0" x2="1"><stop offset="0" stop-color="#444"/><stop offset=".5" stop-color="#c8c8c8"/><stop offset="1" stop-color="#444"/></linearGradient></defs><ellipse cx="12" cy="6.500" rx="10.500" ry="4.500" fill="none" stroke="#2e2e30" stroke-width="1" stroke-dasharray="2 1.500"/><path d="M1 11v4.500q0 5 11 5t11-5V11z" fill="url(#gbw)"/><ellipse cx="12" cy="11" rx="11" ry="4.200" fill="#2a2a2c" stroke="#ddd" stroke-width="1"/></svg>
<svg style="left:1200px;top:435px" width="16" height="24" viewBox="0 0 16 24"><defs><linearGradient id="glh" x1="0" x2="1"><stop offset="0" stop-color="#3a3a3c"/><stop offset=".45" stop-color="#fff"/><stop offset="1" stop-color="#5a5a5c"/></linearGradient></defs><path d="M0 2l5 2.500v3L0 10zM16 2l-5 2.500v3L16 10z" fill="#a8a8aa"/><path d="M5.500 1h5v8h-5z" fill="#f2f2f2" stroke="#444" stroke-width=".6"/><path d="M5 9h6l2 14H3z" fill="url(#glh)"/></svg>
<svg style="left:1223px;top:435px" width="18" height="22" viewBox="0 0 18 22"><path d="M4.500 10V6.500a4.500 4.500 0 0 1 9 0V10" fill="none" stroke="#434346" stroke-width="2.400"/><rect x="1" y="9.500" width="16" height="12" rx="1.500" fill="#4c4d50" stroke="#333" stroke-width=".8"/><path d="M9 13v5" stroke="#1e1e20" stroke-width="2.200" stroke-linecap="round"/></svg>
<svg style="left:1245px;top:436px" width="21" height="22" viewBox="0 0 21 22"><path d="M3.500 6V4.500a3 3 0 0 1 6 0V6" fill="none" stroke="#fff" stroke-width="1.800"/><rect x=".5" y="5.500" width="12" height="8.500" rx="1" fill="#fff"/><path d="M6.500 8v3.500" stroke="#333" stroke-width="1.800"/><rect x="8.500" y="10.500" width="12" height="11" fill="#fff" stroke="#3a3a3c" stroke-width="1"/><path d="M9 11h5.500v5.500H9zM14.500 16.500H20V21h-5.500z" fill="#6e6f73"/></svg>
<div class="a" style="left:1268px;top:436px;width:36px;height:21px;background:#77787c;border:1px solid #808185;border-radius:3px"></div>
<svg style="left:1272px;top:438px" width="30" height="18" viewBox="0 0 30 18" opacity=".8"><path d="M1 12V4l4 3 3-5 3 5 4-3v8z" fill="#636468"/><path d="M1 13.500h14" stroke="#636468" stroke-width="2"/><path d="M17 6h11l-5.500 6z" fill="#636468"/><path d="M13 11l5 6M18 11l-5 6" stroke="#66676b" stroke-width="1.600"/></svg>
<div class="a" style="left:1307px;top:436px;width:35px;height:21px;background:#77787c;border:1px solid #808185;border-radius:3px"></div>
<svg style="left:1310px;top:438px" width="30" height="18" viewBox="0 0 30 18" opacity=".8"><path d="M2 1h14L2 15z" fill="none" stroke="#636468" stroke-width="2.200"/><path d="M18 6h11l-5.500 6z" fill="#636468"/><path d="M13 11l5 6M18 11l-5 6" stroke="#66676b" stroke-width="1.600"/></svg>
<!-- layer list -->
<div class="a" style="left:1142px;top:409px;width:1px;height:284px;background:#303133"></div>
<div class="a" style="left:1145px;top:461px;width:2px;height:231px;background:linear-gradient(90deg,#55565a,#303133)"></div>
<div class="a" style="left:1146px;top:461px;width:183px;height:1px;background:#4e4f52"></div>
<div class="a" style="left:1168px;top:461px;width:1px;height:66px;background:#4e4f52"></div>
<div class="a" style="left:1189px;top:461px;width:1px;height:66px;background:#4e4f52"></div>
<div class="a" style="left:1190px;top:462px;width:139px;height:32px;background:linear-gradient(#647e8d,#5d7787)"></div>
<div class="a" style="left:1146px;top:494px;width:183px;height:1px;background:#4e4f52"></div>
<div class="a" style="left:1146px;top:526px;width:183px;height:1px;background:#4e4f52"></div>
<div class="a" style="left:1329px;top:461px;width:13px;height:231px;background:#707175;border-left:1px solid #626367;box-shadow:inset -1px 0 0 #7c7d81"></div>
<svg style="left:1149px;top:473px" width="16" height="10" viewBox="0 0 16 10"><path d="M.5 5Q8-3 15.500 5 8 13 .5 5z" fill="#f6f6f6" stroke="#222" stroke-width=".8"/><circle cx="8" cy="5" r="3.500" fill="#111"/><circle cx="6.800" cy="3.800" r="1" fill="#ddd"/></svg>
<svg style="left:1149px;top:505px" width="16" height="10" viewBox="0 0 16 10"><path d="M.5 5Q8-3 15.500 5 8 13 .5 5z" fill="#f6f6f6" stroke="#222" stroke-width=".8"/><circle cx="8" cy="5" r="3.500" fill="#111"/><circle cx="6.800" cy="3.800" r="1" fill="#ddd"/></svg>
<svg style="left:1171px;top:471px" width="16" height="15" viewBox="0 0 16 15"><path d="M15 .5L8.500 5 6 9.500l3.500-1z" fill="#1a1a1c"/><path d="M6.500 8.500L1 14l1.500-.2 5.500-4z" fill="#d8d8d8" stroke="#444" stroke-width=".5"/></svg>
<!-- thumb 1 -->
<div class="a" style="left:1194px;top:463px;width:38px;height:30px;background:#68696d;border:1px solid #111;box-shadow:inset 0 0 0 1px #2c3a44"></div>
<div class="a" style="left:1197px;top:468px;width:32px;height:19px;background:repeating-conic-gradient(#fff 0 25%,#cdcdcf 0 50%) 0 1px/8px 8px"></div>
<div class="t" style="left:1235px;top:464px;font-size:12px;color:#fff;font-family:'Liberation Mono','Noto Sans CJK TC',monospace;letter-spacing:-1.200px">100 % <span style="letter-spacing:0;font-family:'Liberation Sans','Noto Sans CJK TC',sans-serif">普通</span></div>
<div class="t" style="left:1235px;top:477px;font-size:12px;color:#fff">圖層 <span style="font-family:'Liberation Serif',serif;font-size:13px">1</span></div>
<!-- row 2 -->
<div class="a" style="left:1196px;top:498px;width:34px;height:25px;background:#fff;border:1px solid #1a1a1c"></div>
<div class="a" style="left:1235px;top:497px;width:24px;height:24px;background:#6a6b6f;border:1px solid #1e1e20"></div>
<svg style="left:1238px;top:499px" width="19" height="21" viewBox="0 0 19 21"><defs><linearGradient id="gpp" x1="0" y1="0" x2="1" y2="1"><stop offset="0" stop-color="#dcebf4"/><stop offset="1" stop-color="#fff"/></linearGradient></defs><path d="M.5.500h11l6.500 6.500v13H.5z" fill="url(#gpp)" stroke="#f8f8f8" stroke-width="1"/><path d="M11.500.500v6.500h6.500" fill="#e4eef4" stroke="#9aa" stroke-width=".8"/></svg>
<div class="t" style="left:1262px;top:509px;font-size:12px;color:#fff">紙張</div>
<div class="a" style="left:1146px;top:692px;width:183px;height:1px;background:#606165"></div>
<!-- mouse cursor -->
<svg style="left:1196px;top:602px" width="14" height="22" viewBox="0 0 14 22"><path d="M1 1v16l4-3.500 2.800 6.500 2.500-1-2.800-6.300H13z" fill="#fff" stroke="#111" stroke-width="1.100" stroke-linejoin="round"/></svg>
<!-- bottom icons -->
<svg style="left:1157px;top:693px" width="19" height="23" viewBox="0 0 19 23"><path d="M.5.500h18v15.500l-6 6.500H.5z" fill="url(#gnw)" stroke="#cfd5da" stroke-width=".6"/><path d="M18.500 16h-6.500v6.500z" fill="#555"/><path d="M12.500 16.500h5.500l-5.500 5.500z" fill="#e8e8e8"/></svg>
<svg style="left:1180px;top:696px" width="23" height="21" viewBox="0 0 23 21"><path d="M.5.500h15v17.500H.5z" fill="url(#gnw)" stroke="#cfd5da" stroke-width=".6"/><path d="M12 14l5-2.500 5 2.500v4.500L17 21l-5-2.500z" fill="#f4f4f4" stroke="#555" stroke-width=".8"/><path d="M12 14l5 2.500 5-2.500M17 16.500V21" fill="none" stroke="#555" stroke-width=".8"/></svg>
<svg style="left:1203px;top:696px" width="24" height="21" viewBox="0 0 24 21"><path d="M.5 15.500V.500h7l2 2.500h6.500v12.500z" fill="#c4c4c6" stroke="#9a9a9c" stroke-width=".6"/><path d="M12 8h11.500v9l-3.500 3.500H12z" fill="#fbfbfb" stroke="#bbb" stroke-width=".6"/><path d="M23.500 17h-3.500v3.500z" fill="#555"/></svg>
<svg style="left:1230px;top:697px" width="15" height="18" viewBox="0 0 15 18" opacity=".6"><path d="M0 7l7.500-6 7.500 6-7.500 3z" fill="#505154"/><path d="M0 11l7.500 6 7.500-6-7.500-3z" fill="#5a5b5e"/><path d="M7.500 4v10M5 6.500L7.500 4 10 6.500M5 11.500l2.500 2.500 2.500-2.500" fill="none" stroke="#77787c" stroke-width="1.200"/></svg>
<svg style="left:1252px;top:696px" width="19" height="21" viewBox="0 0 19 21"><path d="M0 6L9.500 1 19 6l-9.500 4z" fill="#2c2c2e"/><path d="M0 11.500l9.500-4 9.500 4-9.500 8z" fill="#fafafa" stroke="#bbb" stroke-width=".5"/><path d="M9.500 3v9" stroke="#111" stroke-width="2.600"/><path d="M5.500 10h8l-4 5z" fill="#111"/><path d="M2 8.500l-2 1.500M17 8.500l2 1.500" stroke="#2c2c2e" stroke-width="1.400"/></svg>
<svg style="left:1273px;top:698px" width="24" height="17" viewBox="0 0 24 17"><defs><linearGradient id="gmk" x1="0" x2="1"><stop offset="0" stop-color="#dcdcde"/><stop offset=".5" stop-color="#5a5b5e"/><stop offset="1" stop-color="#3a3a3c"/></linearGradient></defs><rect x=".5" y=".5" width="23" height="16" fill="url(#gmk)" stroke="#77787c" stroke-width=".6"/><circle cx="12" cy="8.500" r="5" fill="#fff"/></svg>
<svg style="left:1298px;top:696px" width="21" height="21" viewBox="0 0 21 21" opacity=".6"><path d="M3.500 0v14" stroke="#55565a" stroke-width="1.400" stroke-dasharray="2 1.400"/><path d="M0 13h7l-3.500 5z" fill="#55565a"/><path d="M8 6l6-3.500 6 3.500-6 3z" fill="#55565a"/><path d="M8 15l6-3 6 3-6 4.500z" fill="#86878b"/></svg>
<svg style="left:1322px;top:693px" width="20" height="24" viewBox="0 0 21 24"><path d="M5 6q5.500-8 11 0" fill="none" stroke="#f2f2f2" stroke-width="1.800"/><ellipse cx="10.500" cy="8" rx="9.300" ry="3.200" fill="#f7f7f7" stroke="#999" stroke-width=".6"/><path d="M2.500 10.500l2 12h12l2-12q-8 3-16 0z" fill="#f3f3f3" stroke="#aaa" stroke-width=".5"/><path d="M6 12.500l1 9M9.500 13v9M13 13l-.5 9M16 12.500l-1.500 9" stroke="#9a9a9a" stroke-width="1"/></svg>
<div class="a" style="left:1347px;top:0;width:2px;height:30px;background:#2a2a2c"></div><div class="a" style="left:1347px;top:30px;width:2px;height:687px;background:#55565a"></div>
<div class="a" style="left:0;top:717px;width:1349px;height:2px;background:#111"></div>
<!--END:RIGHT-->
</body>
</html>
